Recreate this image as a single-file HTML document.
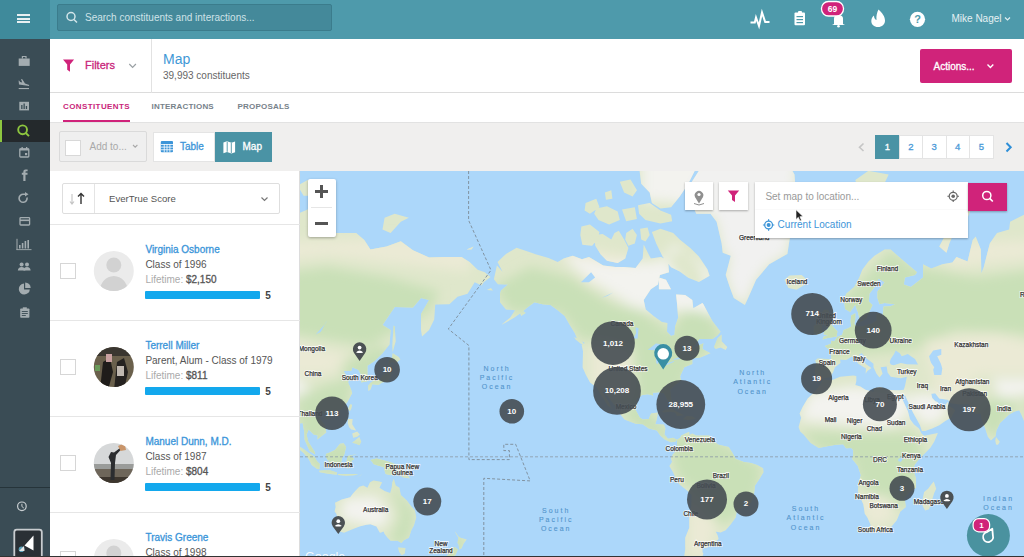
<!DOCTYPE html>
<html><head><meta charset="utf-8">
<style>
*{box-sizing:border-box}
html,body{margin:0;padding:0;width:1024px;height:557px;overflow:hidden;background:#fff;font-family:"Liberation Sans",sans-serif}
.a{position:absolute}
.t{position:absolute;white-space:nowrap;line-height:1}
.m{-webkit-text-stroke:0.3px currentColor}
</style></head><body>
<!-- top bar -->
<div class="a" style="left:0;top:0;width:1024px;height:39px;background:#4e9aab"></div>
<div class="a" style="left:0;top:0;width:50px;height:39px;background:#3f8a9b"></div>
<div class="a" style="left:17px;top:14px;width:13px;height:2px;background:#e8f0f2"></div>
<div class="a" style="left:17px;top:17.5px;width:13px;height:2px;background:#e8f0f2"></div>
<div class="a" style="left:17px;top:21px;width:13px;height:2px;background:#e8f0f2"></div>
<div class="a" style="left:57px;top:4px;width:275px;height:27px;background:#44899a;border:1px solid #3b7c8c;border-radius:2px"></div>
<div class="t" style="left:85px;top:12.5px;font-size:10px;color:#cfe3e8">Search constituents and interactions...</div>
<!-- sidebar -->
<div class="a" style="left:0;top:39px;width:50px;height:518px;background:#3a4c55"></div>
<div class="a" style="left:0;top:120px;width:50px;height:22px;background:#24292c"></div>
<div class="a" style="left:0;top:120px;width:2px;height:22px;background:#8dc63f"></div>
<div class="a" style="left:0;top:487px;width:50px;height:1px;background:#26343a"></div>
<!-- header -->
<div class="a" style="left:50px;top:39px;width:974px;height:54px;background:#fff;border-bottom:1px solid #dcdcdc"></div>
<div class="a" style="left:151px;top:39px;width:1px;height:54px;background:#e2e2e2"></div>
<div class="t m" style="left:85px;top:60px;font-size:11px;color:#c9267a">Filters</div>
<div class="t" style="left:163px;top:51.5px;font-size:14px;color:#3f98d6">Map</div>
<div class="t" style="left:163px;top:71px;font-size:10px;color:#666">39,993 constituents</div>
<div class="a" style="left:920px;top:49px;width:92px;height:34px;background:#d0237a;border-radius:2px"></div>
<div class="t m" style="left:933.5px;top:61.8px;font-size:10px;color:#fff">Actions...</div>
<!-- tabs -->
<div class="a" style="left:50px;top:93px;width:974px;height:29px;background:#fff"></div>
<div class="t" style="left:63px;top:103px;font-size:8px;font-weight:bold;letter-spacing:0.4px;color:#c9267a">CONSTITUENTS</div>
<div class="t" style="left:151.5px;top:103px;font-size:8px;font-weight:bold;letter-spacing:0.2px;color:#77828a">INTERACTIONS</div>
<div class="t" style="left:237.5px;top:103px;font-size:8px;font-weight:bold;letter-spacing:0.2px;color:#77828a">PROPOSALS</div>
<div class="a" style="left:63px;top:120px;width:67px;height:2px;background:#d0237a"></div>
<!-- toolbar -->
<div class="a" style="left:50px;top:122px;width:974px;height:49px;background:#f0efee;border-top:1px solid #e2e2e2"></div>
<div class="a" style="left:59px;top:131px;width:88px;height:31px;background:#efefef;border:1px solid #dadada;border-radius:2px"></div>
<div class="a" style="left:65px;top:139.5px;width:16px;height:16px;background:#fff;border:1px solid #d8d8d8"></div>
<div class="t" style="left:89.5px;top:142px;font-size:10px;color:#a9a9a9">Add to...</div>
<div class="a" style="left:153px;top:132px;width:62px;height:30px;background:#fff;border:1px solid #e4e4e4"></div>
<div class="a" style="left:215px;top:132px;width:57px;height:30px;background:#4a93a5"></div>
<div class="t m" style="left:180px;top:142px;font-size:10px;color:#3d95d8">Table</div>
<div class="t m" style="left:242.5px;top:142px;font-size:10px;color:#fff">Map</div>
<!-- list panel -->
<div class="a" style="left:50px;top:171px;width:250px;height:386px;background:#fff;border-right:1px solid #dcdcdc"></div>

<svg class="a" style="left:0;top:0" width="1024" height="557" viewBox="0 0 1024 557">
<g fill="none" stroke="#d2e5ea" stroke-width="1.5"><circle cx="71" cy="16.5" r="4"/><path d="M74 19.5L77 22.5"/></g>
<g fill="none" stroke="#fff" stroke-width="2" stroke-linejoin="miter" stroke-linecap="square"><path d="M751.5 22.5H754.8L756 17.5L759 26L762 12.5L765.2 22H768.5"/></g>
<g><rect x="794.5" y="12.5" width="10.5" height="12.7" rx="1" fill="#fff"/><rect x="798" y="11" width="4" height="2.5" rx="1" fill="#fff"/>
<rect x="796.5" y="16" width="6.5" height="1.2" fill="#4e9aab"/><rect x="796.5" y="19" width="6.5" height="1.2" fill="#4e9aab"/><rect x="796.5" y="22" width="6.5" height="1.2" fill="#4e9aab"/></g>
<g fill="#fff"><path d="M834 24V18.5Q834 15 838.5 15Q843 15 843 18.5V24L845 25H832Z"/><circle cx="838.5" cy="26.3" r="1.3"/></g>
<rect x="821.5" y="1.5" width="22" height="14.5" rx="7" fill="#d0237a" stroke="#fff" stroke-width="1.3"/>
<text x="832.5" y="12" font-size="8.5" font-weight="bold" fill="#fff" text-anchor="middle" font-family="Liberation Sans">69</text>
<path d="M878.5 9.5C882 13 885 16 885 20.5C885 24.5 882 27 878 27C874 27 871.3 24.5 871.3 21C871.3 18.5 872.5 16.5 874 15.5C874 18 875 19.5 876.5 20C876 16 877 12.5 878.5 9.5Z" fill="#fff"/>
<circle cx="917.5" cy="19.3" r="7.6" fill="#fff"/>
<text x="917.6" y="23.2" font-size="11" font-weight="bold" fill="#4e9aab" text-anchor="middle" font-family="Liberation Sans">?</text>
<path d="M1005 17.5L1007.5 20L1010 17.5" fill="none" stroke="#dfeef1" stroke-width="1.2"/>
<!-- sidebar icons -->
<g fill="#a3acb0">
<path d="M18.7 58.5h11v7.4h-11z"/><path d="M21.8 58.5v-2.6h4.8v2.6h-1.2v-1.5h-2.4v1.5z"/>
<path d="M18.7 88h10.3v1.1h-10.3z"/>
<path d="M19 84.5L29 86L29.2 85L25 83.5L22.3 79.3L21 79L22.2 82.6L20.1 82L19.3 80.7L18.6 80.6L19 84.5Z"/>
<path d="M19.3 101.8h9.7v8.6h-9.7z"/>
</g>
<g fill="#3a4c55"><rect x="21.2" y="105" width="1.3" height="4"/><rect x="23.5" y="103.5" width="1.3" height="5.5"/><rect x="25.8" y="106" width="1.3" height="3"/></g>
<g fill="none" stroke="#8dc63f" stroke-width="1.9"><circle cx="22.6" cy="129.8" r="4.4"/><path d="M25.8 133L29 136.2"/></g>
<g fill="none" stroke="#a3acb0" stroke-width="1.3"><rect x="19.8" y="148.8" width="9" height="8.2" rx="0.8"/></g>
<g fill="#a3acb0"><rect x="19.8" y="148.5" width="9" height="2"/><rect x="21.5" y="147" width="1.3" height="2"/><rect x="26" y="147" width="1.3" height="2"/><rect x="25" y="153" width="2.2" height="2.2"/></g>
<path d="M25.5 181V174.8H27.5V172.8H25.5V171.8Q25.5 171.3 26 171.3H27.6V169.6H25.5Q23.3 169.6 23.3 171.8V172.8H21.8V174.8H23.3V181Z" fill="#a3acb0"/>
<g fill="none" stroke="#a3acb0" stroke-width="1.6"><path d="M27 197.5A4 4 0 1 1 23.5 194.3H26"/></g>
<path d="M25 192L28.5 194.3L25 196.6Z" fill="#a3acb0"/>
<g fill="none" stroke="#a3acb0" stroke-width="1.3"><rect x="20" y="217.6" width="9.6" height="7.4" rx="0.8"/></g>
<rect x="20" y="219.5" width="9.6" height="1.6" fill="#a3acb0"/>
<g fill="#a3acb0"><rect x="16.5" y="238.8" width="1" height="11.2"/><rect x="16.5" y="249.2" width="15" height="0.9"/>
<rect x="19" y="245" width="1.6" height="3.5"/><rect x="21.8" y="243" width="1.6" height="5.5"/><rect x="24.6" y="241" width="1.6" height="7.5"/><rect x="27.4" y="240" width="1.6" height="8.5"/></g>
<g fill="#a3acb0"><circle cx="21.6" cy="264.5" r="2"/><circle cx="27" cy="264.5" r="2"/><path d="M17.8 270.6Q18.2 267 21.6 267Q25 267 25.4 270.6Z"/><path d="M23.4 270.6Q23.6 267 27 267Q30.4 267 30.6 270.6Z"/></g>
<path d="M24 283.6A5.5 5.5 0 1 0 29.8 289.4H24Z" fill="#a3acb0"/><path d="M25.2 282.5A5.5 5.5 0 0 1 30.7 288H25.2Z" fill="#a3acb0"/>
<rect x="20.2" y="308.5" width="9.2" height="9.2" rx="0.8" fill="#a3acb0"/><rect x="22.8" y="307.3" width="4" height="2" fill="#a3acb0"/>
<g fill="#3a4c55"><rect x="21.8" y="311" width="6" height="0.9"/><rect x="21.8" y="313" width="6" height="0.9"/><rect x="21.8" y="315" width="4" height="0.9"/></g>
<circle cx="21.9" cy="506.3" r="4.3" fill="none" stroke="#c9cfd2" stroke-width="1.2"/><path d="M21.9 503.8V506.5L23.8 508" fill="none" stroke="#c9cfd2" stroke-width="1"/>
<rect x="14.3" y="529.6" width="27.5" height="30" rx="2.5" fill="#2a3035" stroke="#c8cccf" stroke-width="1.8"/>
<path d="M33.5 535.5V550.5L24.5 545.5Z" fill="#fff"/><circle cx="21.5" cy="549.2" r="2.8" fill="#5aa0b8"/><path d="M19 551L24 546L24.5 551Z" fill="#e8e8e8"/>
<!-- header icons -->
<path d="M63 59.6H74.1L70 64.5V71.7L67.2 69.8V64.5Z" fill="#d0237a"/>
<path d="M129.3 64L132.6 67.3L135.9 64" fill="none" stroke="#9aa0a4" stroke-width="1.2"/>
<path d="M987.5 64.5L990.4 67.4L993.3 64.5" fill="none" stroke="#fff" stroke-width="1.4"/>
<path d="M133 145L135.2 147.2L137.4 145" fill="none" stroke="#a9a9a9" stroke-width="1.1"/>
<g fill="#3d95d8"><rect x="160.8" y="141" width="12.2" height="11.3" rx="1"/></g>
<g fill="#fff"><rect x="160.8" y="144" width="12.2" height="0.8"/><rect x="160.8" y="146.7" width="12.2" height="0.8"/><rect x="160.8" y="149.4" width="12.2" height="0.8"/>
<rect x="163.8" y="144" width="0.8" height="8.3"/><rect x="166.6" y="144" width="0.8" height="8.3"/><rect x="169.5" y="144" width="0.8" height="8.3"/></g>
<path d="M223.4 142.5L227 141.2L231.5 142.7L235.1 141.4V152.2L231.5 153.5L227 152L223.4 153.3Z" fill="#fff"/>
<path d="M227.2 141.8V151.8M231.3 143V153" stroke="#4a93a5" stroke-width="0.9"/>
</svg>

<div class="a" style="left:61.5px;top:183px;width:218.5px;height:31px;border:1px solid #dedede;border-radius:2px;background:#fff"></div>
<div class="a" style="left:94px;top:184px;width:1px;height:29px;background:#e4e4e4"></div>
<div class="t" style="left:109px;top:194px;font-size:9.6px;color:#555">EverTrue Score</div>
<div class="a" style="left:50px;top:224px;width:250px;height:1px;background:#e6e6e6"></div>
<div class="a" style="left:50px;top:320px;width:250px;height:1px;background:#e6e6e6"></div>
<div class="a" style="left:50px;top:416px;width:250px;height:1px;background:#e6e6e6"></div>
<div class="a" style="left:50px;top:512px;width:250px;height:1px;background:#e6e6e6"></div>
<div class="a" style="left:59.5px;top:262.5px;width:16px;height:16px;border:1px solid #d6d6d6;background:#fff"></div>
<div class="t m" style="left:145.4px;top:244.83px;font-size:10px;color:#3a95d9">Virginia Osborne</div>
<div class="t" style="left:145.4px;top:259.83px;font-size:10px;color:#555">Class of 1996</div>
<div class="t" style="left:145.4px;top:274.53px;font-size:10px;color:#aaa">Lifetime: <span class="m" style="color:#555">$2,150</span></div>
<div class="a" style="left:144.8px;top:291.2px;width:115px;height:8.3px;background:#13a8ed;border-radius:1px"></div>
<div class="t" style="left:265.3px;top:290.72999999999996px;font-size:10px;font-weight:bold;color:#444">5</div>
<div class="a" style="left:59.5px;top:358.5px;width:16px;height:16px;border:1px solid #d6d6d6;background:#fff"></div>
<div class="t m" style="left:145.4px;top:340.83px;font-size:10px;color:#3a95d9">Terrell Miller</div>
<div class="t" style="left:145.4px;top:355.83px;font-size:10px;color:#555">Parent, Alum - Class of 1979</div>
<div class="t" style="left:145.4px;top:370.53px;font-size:10px;color:#aaa">Lifetime: <span class="m" style="color:#555">$811</span></div>
<div class="a" style="left:144.8px;top:387.2px;width:115px;height:8.3px;background:#13a8ed;border-radius:1px"></div>
<div class="t" style="left:265.3px;top:386.72999999999996px;font-size:10px;font-weight:bold;color:#444">5</div>
<div class="a" style="left:59.5px;top:454.5px;width:16px;height:16px;border:1px solid #d6d6d6;background:#fff"></div>
<div class="t m" style="left:145.4px;top:436.83px;font-size:10px;color:#3a95d9">Manuel Dunn, M.D.</div>
<div class="t" style="left:145.4px;top:451.83px;font-size:10px;color:#555">Class of 1987</div>
<div class="t" style="left:145.4px;top:466.53px;font-size:10px;color:#aaa">Lifetime: <span class="m" style="color:#555">$804</span></div>
<div class="a" style="left:144.8px;top:483.2px;width:115px;height:8.3px;background:#13a8ed;border-radius:1px"></div>
<div class="t" style="left:265.3px;top:482.72999999999996px;font-size:10px;font-weight:bold;color:#444">5</div>
<div class="a" style="left:59.5px;top:550.5px;width:16px;height:16px;border:1px solid #d6d6d6;background:#fff"></div>
<div class="t m" style="left:145.4px;top:532.8299999999999px;font-size:10px;color:#3a95d9">Travis Greene</div>
<div class="t" style="left:145.4px;top:547.8299999999999px;font-size:10px;color:#555">Class of 1998</div>

<svg class="a" style="left:50px;top:171px" width="250" height="386" viewBox="50 171 250 386">
<path d="M72 194V204M70 201.5L72 204L74 201.5" fill="none" stroke="#c4c4c4" stroke-width="1.1"/>
<path d="M81 204V193.5M78 196.5L81 193.5L84 196.5" fill="none" stroke="#333" stroke-width="1.4"/>
<path d="M261.5 197.5L264.5 200.5L267.5 197.5" fill="none" stroke="#777" stroke-width="1.2"/>
<defs><clipPath id="c1"><circle cx="113.8" cy="367" r="20"/></clipPath><clipPath id="c2"><circle cx="113.8" cy="463" r="20"/></clipPath><clipPath id="c0"><circle cx="113.8" cy="271" r="20"/></clipPath><clipPath id="c3"><circle cx="113.8" cy="559" r="20"/></clipPath></defs>
<g clip-path="url(#c0)"><rect x="90" y="248" width="50" height="50" fill="#ebebeb"/><circle cx="113.8" cy="265" r="7.5" fill="#d2d2d2"/><path d="M99 295Q100 277 113.8 276Q127.6 277 128.6 295Z" fill="#d2d2d2"/></g>
<g clip-path="url(#c3)"><rect x="90" y="536" width="50" height="50" fill="#ebebeb"/><circle cx="113.8" cy="553" r="7.5" fill="#d2d2d2"/></g>
<g clip-path="url(#c1)"><rect x="90" y="344" width="50" height="50" fill="#6a604c"/><rect x="90" y="344" width="50" height="12" fill="#3a3630"/>
<path d="M100 390L103 362L110 358L113 372L108 390Z" fill="#1f1c1a"/><path d="M114 390L117 362L124 358L128 372L124 390Z" fill="#252220"/><rect x="106" y="354" width="6" height="8" fill="#c9a0a0"/><rect x="95" y="365" width="5" height="6" fill="#6a9a5a"/><rect x="117" y="366" width="7" height="10" fill="#c0b8b0"/></g>
<g clip-path="url(#c2)"><rect x="90" y="440" width="50" height="50" fill="#d6d8d9"/><rect x="90" y="464" width="50" height="5" fill="#9a9c9a"/><rect x="90" y="469" width="50" height="20" fill="#6e665a"/><rect x="90" y="477" width="50" height="10" fill="#3d362e"/>
<path d="M110.5 480L111 463L108.5 457L111 452L114 452.5L120 448L121 449.5L116 455L115 463L114.5 480Z" fill="#2b2d30"/><path d="M118 446L124.5 443L126 450L120.5 451Z" fill="#c9956a"/></g>
</svg>


<div class="a" style="left:875.4px;top:135.4px;width:23.9px;height:23.2px;background:#4a93a5"></div>
<div class="a" style="left:899.3px;top:135.4px;width:94.3px;height:23.2px;background:#fff;border:1px solid #e4e4e4"></div>
<div class="a" style="left:922.3px;top:136px;width:1px;height:22px;background:#e4e4e4"></div>
<div class="a" style="left:946px;top:136px;width:1px;height:22px;background:#e4e4e4"></div>
<div class="a" style="left:969.4px;top:136px;width:1px;height:22px;background:#e4e4e4"></div>
<div class="t m" style="left:875.4px;width:23.9px;text-align:center;top:142.3px;font-size:9.5px;color:#fff">1</div>
<div class="t m" style="left:899.3px;width:23px;text-align:center;top:142.3px;font-size:9.5px;color:#4a9ad8">2</div>
<div class="t m" style="left:922.3px;width:23.7px;text-align:center;top:142.3px;font-size:9.5px;color:#4a9ad8">3</div>
<div class="t m" style="left:946px;width:23.4px;text-align:center;top:142.3px;font-size:9.5px;color:#4a9ad8">4</div>
<div class="t m" style="left:969.4px;width:24.2px;text-align:center;top:142.3px;font-size:9.5px;color:#4a9ad8">5</div>
<svg class="a" style="left:850px;top:135px" width="174" height="25" viewBox="850 135 174 25">
<path d="M863.5 143.5L859.5 147.3L863.5 151" fill="none" stroke="#c6c6c6" stroke-width="1.6"/>
<path d="M1006.5 143L1010.7 147.3L1006.5 151.5" fill="none" stroke="#2e8fd8" stroke-width="2"/>
</svg>
<div class="t" style="left:951.5px;top:14px;font-size:10px;color:#e6f1f3">Mike Nagel</div>

<!-- map -->
<div class="a" style="left:300px;top:171px;width:724px;height:386px;overflow:hidden">
<svg width="724" height="386" viewBox="300 171 724 386" style="position:absolute;left:0;top:0">
<rect x="300" y="171" width="724" height="386" fill="#acd7fa"/>
<defs><clipPath id="landclip"><path d="M493.9 279.3L496.9 265.4L502.6 271.8L497.5 262.0L506.0 253.9L516.6 247.7L526.3 250.9L536.4 254.5L548.6 258.0L557.7 262.0L563.7 258.6L572.8 255.7L582.0 259.2L589.0 256.9L603.2 265.4L615.4 267.0L623.5 267.0L635.6 268.1L642.7 258.6L643.7 244.5L650.8 258.6L660.9 256.9L668.0 260.3L669.0 272.3L659.9 274.9L657.9 284.6L650.8 289.2L643.7 300.1L645.7 309.4L653.8 316.2L661.9 322.0L667.4 323.1L667.0 331.7L671.0 335.9L674.5 335.0L675.1 326.6L678.1 317.7L677.1 304.2L676.1 294.6L685.2 295.0L692.3 300.1L693.3 308.2L702.4 303.0L703.4 304.2L708.5 314.0L712.5 321.3L720.6 331.7L717.6 335.3L712.5 339.1L699.4 339.1L691.3 348.9L703.4 343.2L702.4 348.9L710.5 353.3L700.4 357.6L692.3 358.4L692.3 364.0L684.2 367.2L681.2 373.7L680.1 376.5L681.2 380.8L676.1 384.2L670.0 389.7L671.0 396.8L671.8 402.5L670.0 404.3L667.0 399.1L663.9 393.3L658.9 392.3L652.8 392.8L653.2 395.6L647.8 394.2L642.1 394.9L637.0 399.1L636.6 404.7L636.0 410.7L639.7 417.4L642.7 419.5L648.8 418.9L651.0 413.5L657.9 412.4L656.9 418.9L655.2 424.2L663.9 424.6L665.4 428.4L664.4 434.6L668.0 438.7L673.1 437.7L677.1 439.7L675.1 441.8L671.0 442.2L665.0 439.7L660.3 435.6L656.9 430.5L648.8 428.4L642.7 424.2L635.6 423.8L624.5 419.5L620.4 414.6L620.4 410.2L613.7 404.3L607.3 395.6L601.6 389.0L604.2 395.6L608.3 401.3L610.9 406.9L612.3 409.1L607.3 405.1L603.2 397.9L600.2 393.7L596.9 387.4L590.1 382.5L586.0 375.0L582.6 367.4L583.0 351.3L581.6 344.7L585.0 342.9L576.9 338.2L574.9 333.3L569.8 324.9L564.7 315.9L557.7 310.2L550.6 305.0L542.5 304.2L534.4 302.2L527.3 307.4L522.2 312.1L514.1 317.7L505.0 323.1L501.0 324.9L510.1 317.7L515.2 310.2L506.0 309.4L500.0 302.2L500.0 293.7L501.0 290.6L508.1 284.6L497.9 284.2ZM658.9 289.2L671.0 289.2L666.0 279.8L658.9 277.4ZM686.2 190.7L696.3 213.7L710.5 213.7L716.6 221.8L721.6 243.2L722.7 252.7L730.8 255.7L725.7 274.9L729.7 287.0L733.8 298.0L744.9 305.0L750.0 293.7L756.1 279.8L769.2 264.3L787.4 253.9L789.5 239.9L793.5 221.8L796.5 200.4L794.5 174.4L783.4 155.5L742.9 140.9L712.5 148.4L700.4 168.4ZM784.4 279.8L789.5 275.4L801.6 274.9L804.6 277.4L806.7 282.3L803.6 285.6L796.5 289.7L788.5 287.9ZM855.3 180.1L868.4 170.8L888.7 174.4L878.5 195.7L867.4 208.6L860.3 195.7ZM822.5 339.4L827.9 337.9L836.6 336.6L837.4 331.3L834.6 328.6L831.4 324.5L830.0 319.9L830.0 313.6L827.9 309.8L823.9 309.8L821.4 314.0L822.9 319.5L824.3 323.8L827.9 326.6L827.9 329.0L824.5 330.7L823.5 334.3L827.9 335.3L823.9 336.6ZM821.9 332.7L821.9 326.6L821.9 322.4L818.8 322.0L813.8 325.9L813.8 333.3L816.8 334.6ZM899.4 390.2L894.7 390.2L884.6 389.5L880.6 387.1L874.5 388.6L873.5 392.1L865.4 389.7L860.3 386.4L855.3 384.9L856.3 381.3L856.3 376.0L853.2 375.5L840.1 376.8L831.0 380.5L822.9 379.3L820.8 383.7L814.6 392.1L807.7 398.6L802.6 406.9L799.6 413.5L801.2 417.8L798.6 426.9L800.2 431.5L803.6 434.6L807.1 438.7L810.7 443.0L818.8 448.1L825.9 446.5L836.0 444.8L843.1 444.2L846.1 448.3L851.2 447.9L853.2 449.9L853.2 455.0L852.2 459.0L857.9 466.1L858.9 469.2L860.9 475.3L858.3 483.5L857.9 491.9L863.4 504.6L864.8 513.8L867.4 517.5L870.4 524.3L871.2 530.5L874.5 532.2L878.5 530.3L885.6 530.3L890.7 527.4L896.8 520.3L900.4 511.5L905.9 507.1L904.9 500.5L904.5 497.9L908.9 493.0L916.0 487.7L916.0 478.4L913.6 470.8L914.4 465.1L918.0 460.6L922.1 456.0L930.2 447.9L934.2 441.8L937.9 432.9L924.1 435.8L921.5 433.6L919.0 428.4L914.0 424.6L909.9 418.9L907.9 411.3L903.8 402.5L900.0 393.5ZM933.8 481.5L936.2 488.8L934.2 493.0L931.2 502.7L929.1 509.3L925.1 510.6L922.7 506.0L922.1 501.6L924.1 491.9L928.1 488.8L931.2 484.6ZM996.0 437.1L999.8 441.8L998.0 444.8L996.0 444.4L995.3 440.3ZM677.1 439.7L680.1 437.7L681.2 435.6L684.2 434.0L689.3 431.7L689.3 435.0L692.3 433.6L696.3 435.6L704.4 435.4L709.5 435.6L711.5 439.7L718.6 444.8L728.7 446.9L732.8 453.4L735.8 459.0L743.9 462.1L751.0 463.1L757.1 465.1L763.1 468.2L763.5 472.2L759.1 479.4L755.0 485.6L754.0 494.1L751.0 502.7L746.5 504.9L736.8 510.4L735.8 517.2L730.8 524.3L725.7 530.3L720.6 532.5L715.6 531.5L717.6 535.2L718.6 539.0L715.6 541.8L708.5 542.9L707.5 547.6L702.4 548.2L702.4 552.2L703.4 553.6L701.4 559.2L697.4 563.6L696.3 574.2L694.3 582.3L688.2 585.7L682.2 574.2L684.2 556.4L685.2 549.5L685.2 537.7L689.3 527.8L689.3 516.1L691.3 506.0L691.7 495.1L686.2 489.8L679.5 484.6L677.1 481.5L673.1 472.2L669.4 466.1L672.0 462.1L671.0 458.0L673.1 454.0L675.1 451.9L677.1 448.9L677.1 442.8ZM661.9 411.5L667.2 408.9L672.0 408.9L677.1 411.8L683.8 415.2L677.1 415.9L675.1 412.4L670.0 411.8L663.9 412.4ZM683.2 418.9L686.6 415.9L692.3 416.3L695.7 418.7L692.3 419.5L688.2 419.9L683.6 419.3ZM939.3 246.5L946.4 233.0L952.4 217.8L963.6 209.5L972.7 205.0L967.6 217.8L955.5 229.4L949.4 243.2L946.4 252.7ZM486.8 290.1L492.9 290.6L490.9 287.9ZM521.2 315.9L525.7 312.9L523.2 310.9L520.2 313.6ZM714.0 347.1L717.6 338.2L721.6 334.6L721.6 341.3L727.3 347.1L725.7 350.1L720.6 347.4L715.6 348.9ZM574.1 337.2L580.9 339.8L584.4 344.7L580.9 343.8L575.9 339.8ZM581.4 226.6L589.9 224.4L599.5 231.9L597.4 239.4L592.1 245.8L582.4 244.7L580.3 235.1ZM594.2 235.1L602.7 234.0L611.3 239.4L614.5 233.0L618.8 230.8L624.1 239.4L628.4 247.9L625.2 258.6L617.7 262.9L607.0 260.7L600.6 254.3L595.3 245.8ZM626.2 233.0L632.6 228.7L636.9 235.1L634.8 243.6L628.4 245.8L625.2 239.4ZM640.1 228.7L647.6 227.6L649.7 235.1L645.5 241.5L641.2 239.4ZM651.9 231.9L660.4 228.7L673.2 233.0L679.7 239.4L690.3 247.9L698.9 256.5L707.4 269.3L709.6 275.7L698.9 282.1L688.2 277.8L679.7 271.4L671.1 267.2L662.6 256.5L656.2 243.6ZM596.3 208.4L607.0 206.3L617.7 211.6L619.8 220.1L609.1 224.4L598.5 220.1L594.2 213.7ZM585.6 203.1L596.3 198.8L599.5 207.3L589.9 213.7L584.6 210.5ZM622.0 209.5L634.8 207.3L636.9 219.1L626.2 221.2ZM638.0 205.2L649.7 203.1L660.4 210.5L671.1 214.8L672.2 221.2L660.4 223.4L645.5 220.1L639.1 213.7ZM639.1 166.7L696.8 166.7L688.2 183.8L679.7 196.6L671.1 207.3L660.4 208.4L651.9 203.1L649.7 192.4L641.2 183.8ZM619.8 181.7L630.5 179.5L636.9 190.2L632.6 196.6L624.1 192.4ZM604.9 192.4L611.3 190.2L612.4 198.8L605.9 199.8ZM890.7 249.6L900.8 258.6L917.0 272.3L915.0 274.9L904.9 277.4L903.8 284.6L910.9 287.0L917.0 282.3L923.1 277.4L923.1 264.3L931.2 268.6L942.3 264.3L952.4 262.6L956.5 256.9L967.6 261.5L972.7 239.9L975.7 236.5L980.8 249.6L981.4 273.3L983.8 267.0L989.9 243.2L997.0 233.0L1009.1 229.4L1010.1 221.8L1026.3 213.7L1036.4 209.5L1044.5 198.6L1058.7 207.7L1063.8 233.0L1072.9 233.0L1085.0 233.0L1093.1 239.9L1099.2 249.6L1115.4 246.5L1129.6 241.3L1141.7 250.2L1157.9 257.5L1174.1 256.9L1190.3 256.9L1198.4 262.0L1206.5 269.7L1213.6 272.3L1219.3 276.9L1212.6 282.3L1210.5 285.6L1203.5 282.3L1196.4 293.7L1186.3 296.7L1178.2 304.2L1164.0 304.6L1163.0 319.5L1157.9 330.0L1150.8 336.6L1149.8 330.0L1149.8 314.0L1157.9 300.1L1149.8 298.0L1141.7 307.4L1123.5 307.0L1111.3 324.9L1119.4 330.0L1118.4 344.4L1111.3 353.3L1103.3 360.9L1096.2 365.8L1096.2 381.3L1090.1 382.5L1090.1 375.0L1087.1 369.8L1081.0 367.2L1080.0 371.1L1072.5 371.1L1074.9 375.8L1082.0 375.5L1077.9 378.8L1076.9 382.5L1080.0 389.7L1081.0 393.3L1075.9 402.5L1069.8 409.6L1063.8 410.9L1057.7 413.5L1052.6 412.4L1049.6 415.7L1048.2 418.2L1053.7 425.2L1055.1 432.5L1050.2 436.2L1046.2 439.5L1046.6 435.6L1042.5 434.6L1037.5 429.4L1035.4 434.6L1037.1 441.8L1043.5 451.9L1044.1 454.4L1038.5 450.9L1033.4 439.7L1033.0 431.5L1031.4 423.1L1025.3 424.2L1021.3 414.6L1019.2 410.2L1014.2 411.8L1009.1 414.6L1000.0 423.1L996.4 430.5L995.6 436.2L990.9 440.5L987.9 436.7L984.8 427.3L981.4 417.8L980.8 413.5L975.7 413.9L973.7 410.4L971.7 407.6L968.6 404.0L958.5 404.3L950.0 402.9L948.0 399.7L939.3 398.4L935.2 393.3L931.2 393.7L932.2 397.9L935.2 401.3L937.9 402.2L938.3 406.5L944.3 406.3L948.0 401.8L948.4 405.8L952.4 408.0L955.1 410.4L951.0 417.8L945.3 421.0L939.3 425.2L932.2 428.4L925.1 430.9L921.9 431.1L920.0 425.2L913.0 412.4L904.7 394.4L903.2 398.4L900.0 393.5L899.4 390.2L903.8 389.7L904.9 386.2L906.9 376.8L900.8 378.3L895.7 377.5L890.7 376.8L887.6 372.4L887.0 368.5L886.6 366.4L880.6 367.2L882.6 373.7L879.5 377.5L876.5 373.7L873.5 367.2L873.5 363.7L865.4 357.6L861.7 353.0L858.9 354.8L861.3 359.0L866.4 364.5L871.5 368.0L867.4 371.1L865.6 373.7L866.0 368.5L858.3 363.7L854.6 357.9L851.8 356.5L846.1 360.1L840.1 359.6L840.5 363.1L835.0 367.2L833.0 372.4L830.0 377.0L822.7 378.8L820.8 376.8L815.8 376.3L814.8 371.1L816.2 363.1L815.2 360.4L817.8 358.4L831.0 359.3L831.6 351.9L824.9 345.9L831.0 343.8L831.4 340.7L834.4 341.3L837.2 336.9L842.1 335.0L843.7 330.0L848.2 328.3L851.2 326.6L850.6 321.3L851.2 315.5L855.3 313.2L855.3 318.8L854.2 323.8L856.3 326.6L862.3 326.6L871.5 323.8L876.9 320.6L876.5 314.0L879.5 314.0L882.6 315.9L883.6 306.6L890.7 306.2L895.1 304.2L884.6 303.0L879.5 304.2L877.5 298.0L877.5 291.5L884.6 282.3L878.5 278.4L876.5 284.6L869.4 293.7L868.8 301.4L872.5 305.0L867.4 315.9L866.4 318.8L860.3 321.7L859.3 317.7L857.9 312.1L856.3 308.2L855.3 304.6L850.2 312.1L845.1 309.0L844.1 300.1L846.1 293.7L854.2 287.0L859.3 277.4L862.3 269.7L868.4 261.5L874.5 255.7L884.6 249.6ZM1097.2 390.9L1099.2 389.7L1101.2 384.2L1107.3 384.9L1110.9 382.5L1117.0 381.3L1119.0 377.5L1121.5 369.8L1120.5 365.0L1117.4 367.2L1117.0 372.4L1111.3 375.5L1108.9 379.8L1103.3 380.0L1099.2 383.0L1096.8 385.7ZM1117.4 364.5L1120.5 361.8L1124.5 363.1L1129.2 359.6L1127.5 357.0L1121.5 353.3L1120.5 359.0L1118.0 359.8ZM1121.5 351.9L1124.5 341.3L1123.5 326.6L1122.5 325.6L1121.5 338.2L1121.1 345.9ZM1076.9 409.1L1079.0 404.3L1081.0 404.7L1080.0 409.1L1078.6 411.3ZM1053.9 417.4L1056.7 415.4L1058.7 416.5L1056.7 419.3L1054.1 418.9ZM1076.9 418.9L1081.4 418.9L1081.0 424.2L1085.0 430.5L1080.0 429.4L1077.9 427.3L1076.5 423.1ZM1081.0 442.8L1088.1 437.1L1090.1 441.8L1088.1 445.2L1085.0 443.8ZM1081.0 433.6L1086.0 431.5L1088.7 434.6L1086.0 436.7L1082.0 437.7ZM1054.7 454.0L1059.7 451.9L1063.8 449.9L1068.8 443.8L1072.5 443.2L1074.9 446.9L1072.9 455.0L1070.9 458.0L1069.8 463.1L1065.8 465.1L1058.7 463.1L1056.7 460.0L1054.7 457.0ZM1026.9 445.6L1032.4 448.9L1037.5 453.0L1043.5 457.0L1045.6 461.0L1048.6 464.1L1048.2 469.2L1045.6 468.8L1040.5 465.1L1037.5 459.0L1032.4 453.0L1027.3 448.9ZM1047.6 470.8L1053.7 470.2L1058.7 470.2L1065.8 472.6L1065.8 474.7L1056.7 473.7L1048.6 472.2ZM1066.8 473.9L1074.9 473.9L1083.0 473.9L1087.1 474.3L1083.0 475.3L1074.9 475.7L1066.8 474.9ZM1085.0 477.8L1091.7 474.1L1089.1 475.3ZM1075.9 468.2L1074.9 463.1L1076.5 456.0L1086.0 454.0L1079.0 456.0L1083.0 459.0L1080.0 461.0L1082.0 466.5L1079.0 463.1L1077.9 468.2ZM1099.2 460.0L1105.3 458.6L1111.3 460.0L1119.4 462.3L1128.6 466.1L1132.6 470.2L1138.7 478.4L1131.6 477.3L1125.5 472.8L1119.4 475.3L1114.4 473.9L1112.4 467.1L1107.3 465.7L1102.2 464.1L1101.2 462.1ZM1134.6 468.2L1141.7 465.7L1140.7 468.2L1135.6 469.6ZM1063.8 502.7L1070.5 499.6L1079.0 497.3L1081.4 494.1L1084.0 490.9L1088.1 486.7L1092.1 485.6L1096.2 487.7L1098.8 482.3L1102.2 480.4L1108.3 481.5L1110.9 482.5L1109.3 485.6L1108.3 487.7L1113.4 490.9L1119.0 493.0L1120.5 487.7L1121.1 482.5L1122.5 478.8L1124.5 485.6L1128.2 487.7L1129.6 495.1L1135.6 500.5L1139.7 506.0L1143.7 510.4L1145.0 517.5L1142.7 525.4L1140.3 529.8L1137.7 537.7L1132.6 540.3L1130.2 543.1L1126.5 540.8L1119.4 540.8L1116.4 537.7L1113.4 534.0L1112.4 531.5L1109.3 532.7L1108.3 532.2L1105.3 526.6L1099.2 524.3L1095.2 524.7L1089.1 526.2L1085.0 527.8L1080.0 529.8L1072.9 532.7L1066.8 531.0L1068.2 528.6L1068.4 525.4L1066.8 520.7L1065.2 513.8L1063.4 511.5L1064.4 507.1ZM1126.9 547.4L1134.2 547.9L1133.6 553.6L1130.6 555.3L1127.9 551.7ZM1183.6 531.3L1187.3 536.5L1189.3 537.7L1195.4 539.5L1192.3 543.7L1190.3 548.2L1188.3 549.5L1187.3 544.2L1186.3 542.9L1187.3 537.7L1184.2 532.7ZM1183.2 546.8L1186.7 549.5L1184.2 555.0L1180.2 557.8L1179.2 561.5L1175.1 563.6L1171.1 561.5L1175.1 556.4L1180.2 550.9ZM1026.3 185.5L1036.4 180.1L1044.5 180.1L1044.5 195.7L1032.4 195.7ZM1111.3 229.4L1119.4 233.0L1129.6 221.8L1137.7 217.8L1123.5 213.7L1113.4 217.8ZM1195.4 249.6L1202.4 246.5L1200.4 249.6ZM161.9 249.6L172.0 258.6L188.2 272.3L186.2 274.9L176.1 277.4L175.0 284.6L182.1 287.0L188.2 282.3L194.3 277.4L194.3 264.3L202.4 268.6L213.5 264.3L223.6 262.6L227.7 256.9L238.8 261.5L243.9 239.9L246.9 236.5L252.0 249.6L252.6 273.3L255.0 267.0L261.1 243.2L268.2 233.0L280.3 229.4L281.3 221.8L297.5 213.7L307.6 209.5L315.7 198.6L329.9 207.7L335.0 233.0L344.1 233.0L356.2 233.0L364.3 239.9L370.4 249.6L386.6 246.5L400.8 241.3L412.9 250.2L429.1 257.5L445.3 256.9L461.5 256.9L469.6 262.0L477.7 269.7L484.8 272.3L490.5 276.9L483.8 282.3L481.7 285.6L474.7 282.3L467.6 293.7L457.5 296.7L449.4 304.2L435.2 304.6L434.2 319.5L429.1 330.0L422.0 336.6L421.0 330.0L421.0 314.0L429.1 300.1L421.0 298.0L412.9 307.4L394.7 307.0L382.5 324.9L390.6 330.0L389.6 344.4L382.5 353.3L374.5 360.9L367.4 365.8L367.4 381.3L361.3 382.5L361.3 375.0L358.3 369.8L352.2 367.2L351.2 371.1L343.7 371.1L346.1 375.8L353.2 375.5L349.1 378.8L348.1 382.5L351.2 389.7L352.2 393.3L347.1 402.5L341.0 409.6L335.0 410.9L328.9 413.5L323.8 412.4L320.8 415.7L319.4 418.2L324.9 425.2L326.3 432.5L321.4 436.2L317.4 439.5L317.8 435.6L313.7 434.6L308.7 429.4L306.6 434.6L308.3 441.8L314.7 451.9L315.3 454.4L309.7 450.9L304.6 439.7L304.2 431.5L302.6 423.1L296.5 424.2L292.5 414.6L290.4 410.2L285.4 411.8L280.3 414.6L271.2 423.1L267.6 430.5L266.8 436.2L262.1 440.5L259.1 436.7L256.0 427.3L252.6 417.8L252.0 413.5L246.9 413.9L244.9 410.4L242.9 407.6L239.8 404.0L229.7 404.3L221.2 402.9L219.2 399.7L210.5 398.4L206.4 393.3L202.4 393.7L203.4 397.9L206.4 401.3L209.1 402.2L209.5 406.5L215.5 406.3L219.2 401.8L219.6 405.8L223.6 408.0L226.3 410.4L222.2 417.8L216.5 421.0L210.5 425.2L203.4 428.4L196.3 430.9L193.1 431.1L191.2 425.2L184.2 412.4L175.9 394.4L174.4 398.4L171.2 393.5L170.6 390.2L175.0 389.7L176.1 386.2L178.1 376.8L172.0 378.3L166.9 377.5L161.9 376.8L158.8 372.4L158.2 368.5L157.8 366.4L151.8 367.2L153.8 373.7L150.8 377.5L147.7 373.7L144.7 367.2L144.7 363.7L136.6 357.6L132.9 353.0L130.1 354.8L132.5 359.0L137.6 364.5L142.7 368.0L138.6 371.1L136.8 373.7L137.2 368.5L129.5 363.7L125.8 357.9L123.0 356.5L117.3 360.1L111.3 359.6L111.7 363.1L106.2 367.2L104.2 372.4L101.2 377.0L93.9 378.8L92.0 376.8L87.0 376.3L86.0 371.1L87.4 363.1L86.4 360.4L89.0 358.4L102.2 359.3L102.8 351.9L96.1 345.9L102.2 343.8L102.6 340.7L105.6 341.3L108.4 336.9L113.3 335.0L114.9 330.0L119.4 328.3L122.4 326.6L121.8 321.3L122.4 315.5L126.5 313.2L126.5 318.8L125.4 323.8L127.5 326.6L133.5 326.6L142.7 323.8L148.1 320.6L147.7 314.0L150.8 314.0L153.8 315.9L154.8 306.6L161.9 306.2L166.3 304.2L155.8 303.0L150.8 304.2L148.7 298.0L148.7 291.5L155.8 282.3L149.7 278.4L147.7 284.6L140.6 293.7L140.0 301.4L143.7 305.0L138.6 315.9L137.6 318.8L131.5 321.7L130.5 317.7L129.1 312.1L127.5 308.2L126.5 304.6L121.4 312.1L116.3 309.0L115.3 300.1L117.3 293.7L125.4 287.0L130.5 277.4L133.5 269.7L139.6 261.5L145.7 255.7L155.8 249.6ZM368.4 390.9L370.4 389.7L372.4 384.2L378.5 384.9L382.1 382.5L388.2 381.3L390.2 377.5L392.7 369.8L391.7 365.0L388.6 367.2L388.2 372.4L382.5 375.5L380.1 379.8L374.5 380.0L370.4 383.0L368.0 385.7ZM388.6 364.5L391.7 361.8L395.7 363.1L400.4 359.6L398.7 357.0L392.7 353.3L391.7 359.0L389.2 359.8ZM392.7 351.9L395.7 341.3L394.7 326.6L393.7 325.6L392.7 338.2L392.3 345.9ZM348.1 409.1L350.2 404.3L352.2 404.7L351.2 409.1L349.8 411.3ZM325.1 417.4L327.9 415.4L329.9 416.5L327.9 419.3L325.3 418.9ZM348.1 418.9L352.6 418.9L352.2 424.2L356.2 430.5L351.2 429.4L349.1 427.3L347.7 423.1ZM352.2 442.8L359.3 437.1L361.3 441.8L359.3 445.2L356.2 443.8ZM352.2 433.6L357.2 431.5L359.9 434.6L357.2 436.7L353.2 437.7ZM325.9 454.0L330.9 451.9L335.0 449.9L340.0 443.8L343.7 443.2L346.1 446.9L344.1 455.0L342.1 458.0L341.0 463.1L337.0 465.1L329.9 463.1L327.9 460.0L325.9 457.0ZM298.1 445.6L303.6 448.9L308.7 453.0L314.7 457.0L316.8 461.0L319.8 464.1L319.4 469.2L316.8 468.8L311.7 465.1L308.7 459.0L303.6 453.0L298.5 448.9ZM318.8 470.8L324.9 470.2L329.9 470.2L337.0 472.6L337.0 474.7L327.9 473.7L319.8 472.2ZM338.0 473.9L346.1 473.9L354.2 473.9L358.3 474.3L354.2 475.3L346.1 475.7L338.0 474.9ZM356.2 477.8L362.9 474.1L360.3 475.3ZM347.1 468.2L346.1 463.1L347.7 456.0L357.2 454.0L350.2 456.0L354.2 459.0L351.2 461.0L353.2 466.5L350.2 463.1L349.1 468.2ZM370.4 460.0L376.5 458.6L382.5 460.0L390.6 462.3L399.8 466.1L403.8 470.2L409.9 478.4L402.8 477.3L396.7 472.8L390.6 475.3L385.6 473.9L383.6 467.1L378.5 465.7L373.4 464.1L372.4 462.1ZM405.8 468.2L412.9 465.7L411.9 468.2L406.8 469.6ZM335.0 502.7L341.7 499.6L350.2 497.3L352.6 494.1L355.2 490.9L359.3 486.7L363.3 485.6L367.4 487.7L370.0 482.3L373.4 480.4L379.5 481.5L382.1 482.5L380.5 485.6L379.5 487.7L384.6 490.9L390.2 493.0L391.7 487.7L392.3 482.5L393.7 478.8L395.7 485.6L399.4 487.7L400.8 495.1L406.8 500.5L410.9 506.0L414.9 510.4L416.2 517.5L413.9 525.4L411.5 529.8L408.9 537.7L403.8 540.3L401.4 543.1L397.7 540.8L390.6 540.8L387.6 537.7L384.6 534.0L383.6 531.5L380.5 532.7L379.5 532.2L376.5 526.6L370.4 524.3L366.4 524.7L360.3 526.2L356.2 527.8L351.2 529.8L344.1 532.7L338.0 531.0L339.4 528.6L339.6 525.4L338.0 520.7L336.4 513.8L334.6 511.5L335.6 507.1ZM398.1 547.4L405.4 547.9L404.8 553.6L401.8 555.3L399.1 551.7ZM454.8 531.3L458.5 536.5L460.5 537.7L466.6 539.5L463.5 543.7L461.5 548.2L459.5 549.5L458.5 544.2L457.5 542.9L458.5 537.7L455.4 532.7ZM454.4 546.8L457.9 549.5L455.4 555.0L451.4 557.8L450.4 561.5L446.3 563.6L442.3 561.5L446.3 556.4L451.4 550.9ZM297.5 185.5L307.6 180.1L315.7 180.1L315.7 195.7L303.6 195.7ZM382.5 229.4L390.6 233.0L400.8 221.8L408.9 217.8L394.7 213.7L384.6 217.8ZM466.6 249.6L473.6 246.5L471.6 249.6Z"/></clipPath><filter id="blur" x="-10%" y="-10%" width="120%" height="120%"><feGaussianBlur stdDeviation="6"/></filter></defs><path d="M493.9 279.3L496.9 265.4L502.6 271.8L497.5 262.0L506.0 253.9L516.6 247.7L526.3 250.9L536.4 254.5L548.6 258.0L557.7 262.0L563.7 258.6L572.8 255.7L582.0 259.2L589.0 256.9L603.2 265.4L615.4 267.0L623.5 267.0L635.6 268.1L642.7 258.6L643.7 244.5L650.8 258.6L660.9 256.9L668.0 260.3L669.0 272.3L659.9 274.9L657.9 284.6L650.8 289.2L643.7 300.1L645.7 309.4L653.8 316.2L661.9 322.0L667.4 323.1L667.0 331.7L671.0 335.9L674.5 335.0L675.1 326.6L678.1 317.7L677.1 304.2L676.1 294.6L685.2 295.0L692.3 300.1L693.3 308.2L702.4 303.0L703.4 304.2L708.5 314.0L712.5 321.3L720.6 331.7L717.6 335.3L712.5 339.1L699.4 339.1L691.3 348.9L703.4 343.2L702.4 348.9L710.5 353.3L700.4 357.6L692.3 358.4L692.3 364.0L684.2 367.2L681.2 373.7L680.1 376.5L681.2 380.8L676.1 384.2L670.0 389.7L671.0 396.8L671.8 402.5L670.0 404.3L667.0 399.1L663.9 393.3L658.9 392.3L652.8 392.8L653.2 395.6L647.8 394.2L642.1 394.9L637.0 399.1L636.6 404.7L636.0 410.7L639.7 417.4L642.7 419.5L648.8 418.9L651.0 413.5L657.9 412.4L656.9 418.9L655.2 424.2L663.9 424.6L665.4 428.4L664.4 434.6L668.0 438.7L673.1 437.7L677.1 439.7L675.1 441.8L671.0 442.2L665.0 439.7L660.3 435.6L656.9 430.5L648.8 428.4L642.7 424.2L635.6 423.8L624.5 419.5L620.4 414.6L620.4 410.2L613.7 404.3L607.3 395.6L601.6 389.0L604.2 395.6L608.3 401.3L610.9 406.9L612.3 409.1L607.3 405.1L603.2 397.9L600.2 393.7L596.9 387.4L590.1 382.5L586.0 375.0L582.6 367.4L583.0 351.3L581.6 344.7L585.0 342.9L576.9 338.2L574.9 333.3L569.8 324.9L564.7 315.9L557.7 310.2L550.6 305.0L542.5 304.2L534.4 302.2L527.3 307.4L522.2 312.1L514.1 317.7L505.0 323.1L501.0 324.9L510.1 317.7L515.2 310.2L506.0 309.4L500.0 302.2L500.0 293.7L501.0 290.6L508.1 284.6L497.9 284.2ZM658.9 289.2L671.0 289.2L666.0 279.8L658.9 277.4ZM686.2 190.7L696.3 213.7L710.5 213.7L716.6 221.8L721.6 243.2L722.7 252.7L730.8 255.7L725.7 274.9L729.7 287.0L733.8 298.0L744.9 305.0L750.0 293.7L756.1 279.8L769.2 264.3L787.4 253.9L789.5 239.9L793.5 221.8L796.5 200.4L794.5 174.4L783.4 155.5L742.9 140.9L712.5 148.4L700.4 168.4ZM784.4 279.8L789.5 275.4L801.6 274.9L804.6 277.4L806.7 282.3L803.6 285.6L796.5 289.7L788.5 287.9ZM855.3 180.1L868.4 170.8L888.7 174.4L878.5 195.7L867.4 208.6L860.3 195.7ZM822.5 339.4L827.9 337.9L836.6 336.6L837.4 331.3L834.6 328.6L831.4 324.5L830.0 319.9L830.0 313.6L827.9 309.8L823.9 309.8L821.4 314.0L822.9 319.5L824.3 323.8L827.9 326.6L827.9 329.0L824.5 330.7L823.5 334.3L827.9 335.3L823.9 336.6ZM821.9 332.7L821.9 326.6L821.9 322.4L818.8 322.0L813.8 325.9L813.8 333.3L816.8 334.6ZM899.4 390.2L894.7 390.2L884.6 389.5L880.6 387.1L874.5 388.6L873.5 392.1L865.4 389.7L860.3 386.4L855.3 384.9L856.3 381.3L856.3 376.0L853.2 375.5L840.1 376.8L831.0 380.5L822.9 379.3L820.8 383.7L814.6 392.1L807.7 398.6L802.6 406.9L799.6 413.5L801.2 417.8L798.6 426.9L800.2 431.5L803.6 434.6L807.1 438.7L810.7 443.0L818.8 448.1L825.9 446.5L836.0 444.8L843.1 444.2L846.1 448.3L851.2 447.9L853.2 449.9L853.2 455.0L852.2 459.0L857.9 466.1L858.9 469.2L860.9 475.3L858.3 483.5L857.9 491.9L863.4 504.6L864.8 513.8L867.4 517.5L870.4 524.3L871.2 530.5L874.5 532.2L878.5 530.3L885.6 530.3L890.7 527.4L896.8 520.3L900.4 511.5L905.9 507.1L904.9 500.5L904.5 497.9L908.9 493.0L916.0 487.7L916.0 478.4L913.6 470.8L914.4 465.1L918.0 460.6L922.1 456.0L930.2 447.9L934.2 441.8L937.9 432.9L924.1 435.8L921.5 433.6L919.0 428.4L914.0 424.6L909.9 418.9L907.9 411.3L903.8 402.5L900.0 393.5ZM933.8 481.5L936.2 488.8L934.2 493.0L931.2 502.7L929.1 509.3L925.1 510.6L922.7 506.0L922.1 501.6L924.1 491.9L928.1 488.8L931.2 484.6ZM996.0 437.1L999.8 441.8L998.0 444.8L996.0 444.4L995.3 440.3ZM677.1 439.7L680.1 437.7L681.2 435.6L684.2 434.0L689.3 431.7L689.3 435.0L692.3 433.6L696.3 435.6L704.4 435.4L709.5 435.6L711.5 439.7L718.6 444.8L728.7 446.9L732.8 453.4L735.8 459.0L743.9 462.1L751.0 463.1L757.1 465.1L763.1 468.2L763.5 472.2L759.1 479.4L755.0 485.6L754.0 494.1L751.0 502.7L746.5 504.9L736.8 510.4L735.8 517.2L730.8 524.3L725.7 530.3L720.6 532.5L715.6 531.5L717.6 535.2L718.6 539.0L715.6 541.8L708.5 542.9L707.5 547.6L702.4 548.2L702.4 552.2L703.4 553.6L701.4 559.2L697.4 563.6L696.3 574.2L694.3 582.3L688.2 585.7L682.2 574.2L684.2 556.4L685.2 549.5L685.2 537.7L689.3 527.8L689.3 516.1L691.3 506.0L691.7 495.1L686.2 489.8L679.5 484.6L677.1 481.5L673.1 472.2L669.4 466.1L672.0 462.1L671.0 458.0L673.1 454.0L675.1 451.9L677.1 448.9L677.1 442.8ZM661.9 411.5L667.2 408.9L672.0 408.9L677.1 411.8L683.8 415.2L677.1 415.9L675.1 412.4L670.0 411.8L663.9 412.4ZM683.2 418.9L686.6 415.9L692.3 416.3L695.7 418.7L692.3 419.5L688.2 419.9L683.6 419.3ZM939.3 246.5L946.4 233.0L952.4 217.8L963.6 209.5L972.7 205.0L967.6 217.8L955.5 229.4L949.4 243.2L946.4 252.7ZM486.8 290.1L492.9 290.6L490.9 287.9ZM521.2 315.9L525.7 312.9L523.2 310.9L520.2 313.6ZM714.0 347.1L717.6 338.2L721.6 334.6L721.6 341.3L727.3 347.1L725.7 350.1L720.6 347.4L715.6 348.9ZM574.1 337.2L580.9 339.8L584.4 344.7L580.9 343.8L575.9 339.8ZM581.4 226.6L589.9 224.4L599.5 231.9L597.4 239.4L592.1 245.8L582.4 244.7L580.3 235.1ZM594.2 235.1L602.7 234.0L611.3 239.4L614.5 233.0L618.8 230.8L624.1 239.4L628.4 247.9L625.2 258.6L617.7 262.9L607.0 260.7L600.6 254.3L595.3 245.8ZM626.2 233.0L632.6 228.7L636.9 235.1L634.8 243.6L628.4 245.8L625.2 239.4ZM640.1 228.7L647.6 227.6L649.7 235.1L645.5 241.5L641.2 239.4ZM651.9 231.9L660.4 228.7L673.2 233.0L679.7 239.4L690.3 247.9L698.9 256.5L707.4 269.3L709.6 275.7L698.9 282.1L688.2 277.8L679.7 271.4L671.1 267.2L662.6 256.5L656.2 243.6ZM596.3 208.4L607.0 206.3L617.7 211.6L619.8 220.1L609.1 224.4L598.5 220.1L594.2 213.7ZM585.6 203.1L596.3 198.8L599.5 207.3L589.9 213.7L584.6 210.5ZM622.0 209.5L634.8 207.3L636.9 219.1L626.2 221.2ZM638.0 205.2L649.7 203.1L660.4 210.5L671.1 214.8L672.2 221.2L660.4 223.4L645.5 220.1L639.1 213.7ZM639.1 166.7L696.8 166.7L688.2 183.8L679.7 196.6L671.1 207.3L660.4 208.4L651.9 203.1L649.7 192.4L641.2 183.8ZM619.8 181.7L630.5 179.5L636.9 190.2L632.6 196.6L624.1 192.4ZM604.9 192.4L611.3 190.2L612.4 198.8L605.9 199.8ZM890.7 249.6L900.8 258.6L917.0 272.3L915.0 274.9L904.9 277.4L903.8 284.6L910.9 287.0L917.0 282.3L923.1 277.4L923.1 264.3L931.2 268.6L942.3 264.3L952.4 262.6L956.5 256.9L967.6 261.5L972.7 239.9L975.7 236.5L980.8 249.6L981.4 273.3L983.8 267.0L989.9 243.2L997.0 233.0L1009.1 229.4L1010.1 221.8L1026.3 213.7L1036.4 209.5L1044.5 198.6L1058.7 207.7L1063.8 233.0L1072.9 233.0L1085.0 233.0L1093.1 239.9L1099.2 249.6L1115.4 246.5L1129.6 241.3L1141.7 250.2L1157.9 257.5L1174.1 256.9L1190.3 256.9L1198.4 262.0L1206.5 269.7L1213.6 272.3L1219.3 276.9L1212.6 282.3L1210.5 285.6L1203.5 282.3L1196.4 293.7L1186.3 296.7L1178.2 304.2L1164.0 304.6L1163.0 319.5L1157.9 330.0L1150.8 336.6L1149.8 330.0L1149.8 314.0L1157.9 300.1L1149.8 298.0L1141.7 307.4L1123.5 307.0L1111.3 324.9L1119.4 330.0L1118.4 344.4L1111.3 353.3L1103.3 360.9L1096.2 365.8L1096.2 381.3L1090.1 382.5L1090.1 375.0L1087.1 369.8L1081.0 367.2L1080.0 371.1L1072.5 371.1L1074.9 375.8L1082.0 375.5L1077.9 378.8L1076.9 382.5L1080.0 389.7L1081.0 393.3L1075.9 402.5L1069.8 409.6L1063.8 410.9L1057.7 413.5L1052.6 412.4L1049.6 415.7L1048.2 418.2L1053.7 425.2L1055.1 432.5L1050.2 436.2L1046.2 439.5L1046.6 435.6L1042.5 434.6L1037.5 429.4L1035.4 434.6L1037.1 441.8L1043.5 451.9L1044.1 454.4L1038.5 450.9L1033.4 439.7L1033.0 431.5L1031.4 423.1L1025.3 424.2L1021.3 414.6L1019.2 410.2L1014.2 411.8L1009.1 414.6L1000.0 423.1L996.4 430.5L995.6 436.2L990.9 440.5L987.9 436.7L984.8 427.3L981.4 417.8L980.8 413.5L975.7 413.9L973.7 410.4L971.7 407.6L968.6 404.0L958.5 404.3L950.0 402.9L948.0 399.7L939.3 398.4L935.2 393.3L931.2 393.7L932.2 397.9L935.2 401.3L937.9 402.2L938.3 406.5L944.3 406.3L948.0 401.8L948.4 405.8L952.4 408.0L955.1 410.4L951.0 417.8L945.3 421.0L939.3 425.2L932.2 428.4L925.1 430.9L921.9 431.1L920.0 425.2L913.0 412.4L904.7 394.4L903.2 398.4L900.0 393.5L899.4 390.2L903.8 389.7L904.9 386.2L906.9 376.8L900.8 378.3L895.7 377.5L890.7 376.8L887.6 372.4L887.0 368.5L886.6 366.4L880.6 367.2L882.6 373.7L879.5 377.5L876.5 373.7L873.5 367.2L873.5 363.7L865.4 357.6L861.7 353.0L858.9 354.8L861.3 359.0L866.4 364.5L871.5 368.0L867.4 371.1L865.6 373.7L866.0 368.5L858.3 363.7L854.6 357.9L851.8 356.5L846.1 360.1L840.1 359.6L840.5 363.1L835.0 367.2L833.0 372.4L830.0 377.0L822.7 378.8L820.8 376.8L815.8 376.3L814.8 371.1L816.2 363.1L815.2 360.4L817.8 358.4L831.0 359.3L831.6 351.9L824.9 345.9L831.0 343.8L831.4 340.7L834.4 341.3L837.2 336.9L842.1 335.0L843.7 330.0L848.2 328.3L851.2 326.6L850.6 321.3L851.2 315.5L855.3 313.2L855.3 318.8L854.2 323.8L856.3 326.6L862.3 326.6L871.5 323.8L876.9 320.6L876.5 314.0L879.5 314.0L882.6 315.9L883.6 306.6L890.7 306.2L895.1 304.2L884.6 303.0L879.5 304.2L877.5 298.0L877.5 291.5L884.6 282.3L878.5 278.4L876.5 284.6L869.4 293.7L868.8 301.4L872.5 305.0L867.4 315.9L866.4 318.8L860.3 321.7L859.3 317.7L857.9 312.1L856.3 308.2L855.3 304.6L850.2 312.1L845.1 309.0L844.1 300.1L846.1 293.7L854.2 287.0L859.3 277.4L862.3 269.7L868.4 261.5L874.5 255.7L884.6 249.6ZM1097.2 390.9L1099.2 389.7L1101.2 384.2L1107.3 384.9L1110.9 382.5L1117.0 381.3L1119.0 377.5L1121.5 369.8L1120.5 365.0L1117.4 367.2L1117.0 372.4L1111.3 375.5L1108.9 379.8L1103.3 380.0L1099.2 383.0L1096.8 385.7ZM1117.4 364.5L1120.5 361.8L1124.5 363.1L1129.2 359.6L1127.5 357.0L1121.5 353.3L1120.5 359.0L1118.0 359.8ZM1121.5 351.9L1124.5 341.3L1123.5 326.6L1122.5 325.6L1121.5 338.2L1121.1 345.9ZM1076.9 409.1L1079.0 404.3L1081.0 404.7L1080.0 409.1L1078.6 411.3ZM1053.9 417.4L1056.7 415.4L1058.7 416.5L1056.7 419.3L1054.1 418.9ZM1076.9 418.9L1081.4 418.9L1081.0 424.2L1085.0 430.5L1080.0 429.4L1077.9 427.3L1076.5 423.1ZM1081.0 442.8L1088.1 437.1L1090.1 441.8L1088.1 445.2L1085.0 443.8ZM1081.0 433.6L1086.0 431.5L1088.7 434.6L1086.0 436.7L1082.0 437.7ZM1054.7 454.0L1059.7 451.9L1063.8 449.9L1068.8 443.8L1072.5 443.2L1074.9 446.9L1072.9 455.0L1070.9 458.0L1069.8 463.1L1065.8 465.1L1058.7 463.1L1056.7 460.0L1054.7 457.0ZM1026.9 445.6L1032.4 448.9L1037.5 453.0L1043.5 457.0L1045.6 461.0L1048.6 464.1L1048.2 469.2L1045.6 468.8L1040.5 465.1L1037.5 459.0L1032.4 453.0L1027.3 448.9ZM1047.6 470.8L1053.7 470.2L1058.7 470.2L1065.8 472.6L1065.8 474.7L1056.7 473.7L1048.6 472.2ZM1066.8 473.9L1074.9 473.9L1083.0 473.9L1087.1 474.3L1083.0 475.3L1074.9 475.7L1066.8 474.9ZM1085.0 477.8L1091.7 474.1L1089.1 475.3ZM1075.9 468.2L1074.9 463.1L1076.5 456.0L1086.0 454.0L1079.0 456.0L1083.0 459.0L1080.0 461.0L1082.0 466.5L1079.0 463.1L1077.9 468.2ZM1099.2 460.0L1105.3 458.6L1111.3 460.0L1119.4 462.3L1128.6 466.1L1132.6 470.2L1138.7 478.4L1131.6 477.3L1125.5 472.8L1119.4 475.3L1114.4 473.9L1112.4 467.1L1107.3 465.7L1102.2 464.1L1101.2 462.1ZM1134.6 468.2L1141.7 465.7L1140.7 468.2L1135.6 469.6ZM1063.8 502.7L1070.5 499.6L1079.0 497.3L1081.4 494.1L1084.0 490.9L1088.1 486.7L1092.1 485.6L1096.2 487.7L1098.8 482.3L1102.2 480.4L1108.3 481.5L1110.9 482.5L1109.3 485.6L1108.3 487.7L1113.4 490.9L1119.0 493.0L1120.5 487.7L1121.1 482.5L1122.5 478.8L1124.5 485.6L1128.2 487.7L1129.6 495.1L1135.6 500.5L1139.7 506.0L1143.7 510.4L1145.0 517.5L1142.7 525.4L1140.3 529.8L1137.7 537.7L1132.6 540.3L1130.2 543.1L1126.5 540.8L1119.4 540.8L1116.4 537.7L1113.4 534.0L1112.4 531.5L1109.3 532.7L1108.3 532.2L1105.3 526.6L1099.2 524.3L1095.2 524.7L1089.1 526.2L1085.0 527.8L1080.0 529.8L1072.9 532.7L1066.8 531.0L1068.2 528.6L1068.4 525.4L1066.8 520.7L1065.2 513.8L1063.4 511.5L1064.4 507.1ZM1126.9 547.4L1134.2 547.9L1133.6 553.6L1130.6 555.3L1127.9 551.7ZM1183.6 531.3L1187.3 536.5L1189.3 537.7L1195.4 539.5L1192.3 543.7L1190.3 548.2L1188.3 549.5L1187.3 544.2L1186.3 542.9L1187.3 537.7L1184.2 532.7ZM1183.2 546.8L1186.7 549.5L1184.2 555.0L1180.2 557.8L1179.2 561.5L1175.1 563.6L1171.1 561.5L1175.1 556.4L1180.2 550.9ZM1026.3 185.5L1036.4 180.1L1044.5 180.1L1044.5 195.7L1032.4 195.7ZM1111.3 229.4L1119.4 233.0L1129.6 221.8L1137.7 217.8L1123.5 213.7L1113.4 217.8ZM1195.4 249.6L1202.4 246.5L1200.4 249.6ZM161.9 249.6L172.0 258.6L188.2 272.3L186.2 274.9L176.1 277.4L175.0 284.6L182.1 287.0L188.2 282.3L194.3 277.4L194.3 264.3L202.4 268.6L213.5 264.3L223.6 262.6L227.7 256.9L238.8 261.5L243.9 239.9L246.9 236.5L252.0 249.6L252.6 273.3L255.0 267.0L261.1 243.2L268.2 233.0L280.3 229.4L281.3 221.8L297.5 213.7L307.6 209.5L315.7 198.6L329.9 207.7L335.0 233.0L344.1 233.0L356.2 233.0L364.3 239.9L370.4 249.6L386.6 246.5L400.8 241.3L412.9 250.2L429.1 257.5L445.3 256.9L461.5 256.9L469.6 262.0L477.7 269.7L484.8 272.3L490.5 276.9L483.8 282.3L481.7 285.6L474.7 282.3L467.6 293.7L457.5 296.7L449.4 304.2L435.2 304.6L434.2 319.5L429.1 330.0L422.0 336.6L421.0 330.0L421.0 314.0L429.1 300.1L421.0 298.0L412.9 307.4L394.7 307.0L382.5 324.9L390.6 330.0L389.6 344.4L382.5 353.3L374.5 360.9L367.4 365.8L367.4 381.3L361.3 382.5L361.3 375.0L358.3 369.8L352.2 367.2L351.2 371.1L343.7 371.1L346.1 375.8L353.2 375.5L349.1 378.8L348.1 382.5L351.2 389.7L352.2 393.3L347.1 402.5L341.0 409.6L335.0 410.9L328.9 413.5L323.8 412.4L320.8 415.7L319.4 418.2L324.9 425.2L326.3 432.5L321.4 436.2L317.4 439.5L317.8 435.6L313.7 434.6L308.7 429.4L306.6 434.6L308.3 441.8L314.7 451.9L315.3 454.4L309.7 450.9L304.6 439.7L304.2 431.5L302.6 423.1L296.5 424.2L292.5 414.6L290.4 410.2L285.4 411.8L280.3 414.6L271.2 423.1L267.6 430.5L266.8 436.2L262.1 440.5L259.1 436.7L256.0 427.3L252.6 417.8L252.0 413.5L246.9 413.9L244.9 410.4L242.9 407.6L239.8 404.0L229.7 404.3L221.2 402.9L219.2 399.7L210.5 398.4L206.4 393.3L202.4 393.7L203.4 397.9L206.4 401.3L209.1 402.2L209.5 406.5L215.5 406.3L219.2 401.8L219.6 405.8L223.6 408.0L226.3 410.4L222.2 417.8L216.5 421.0L210.5 425.2L203.4 428.4L196.3 430.9L193.1 431.1L191.2 425.2L184.2 412.4L175.9 394.4L174.4 398.4L171.2 393.5L170.6 390.2L175.0 389.7L176.1 386.2L178.1 376.8L172.0 378.3L166.9 377.5L161.9 376.8L158.8 372.4L158.2 368.5L157.8 366.4L151.8 367.2L153.8 373.7L150.8 377.5L147.7 373.7L144.7 367.2L144.7 363.7L136.6 357.6L132.9 353.0L130.1 354.8L132.5 359.0L137.6 364.5L142.7 368.0L138.6 371.1L136.8 373.7L137.2 368.5L129.5 363.7L125.8 357.9L123.0 356.5L117.3 360.1L111.3 359.6L111.7 363.1L106.2 367.2L104.2 372.4L101.2 377.0L93.9 378.8L92.0 376.8L87.0 376.3L86.0 371.1L87.4 363.1L86.4 360.4L89.0 358.4L102.2 359.3L102.8 351.9L96.1 345.9L102.2 343.8L102.6 340.7L105.6 341.3L108.4 336.9L113.3 335.0L114.9 330.0L119.4 328.3L122.4 326.6L121.8 321.3L122.4 315.5L126.5 313.2L126.5 318.8L125.4 323.8L127.5 326.6L133.5 326.6L142.7 323.8L148.1 320.6L147.7 314.0L150.8 314.0L153.8 315.9L154.8 306.6L161.9 306.2L166.3 304.2L155.8 303.0L150.8 304.2L148.7 298.0L148.7 291.5L155.8 282.3L149.7 278.4L147.7 284.6L140.6 293.7L140.0 301.4L143.7 305.0L138.6 315.9L137.6 318.8L131.5 321.7L130.5 317.7L129.1 312.1L127.5 308.2L126.5 304.6L121.4 312.1L116.3 309.0L115.3 300.1L117.3 293.7L125.4 287.0L130.5 277.4L133.5 269.7L139.6 261.5L145.7 255.7L155.8 249.6ZM368.4 390.9L370.4 389.7L372.4 384.2L378.5 384.9L382.1 382.5L388.2 381.3L390.2 377.5L392.7 369.8L391.7 365.0L388.6 367.2L388.2 372.4L382.5 375.5L380.1 379.8L374.5 380.0L370.4 383.0L368.0 385.7ZM388.6 364.5L391.7 361.8L395.7 363.1L400.4 359.6L398.7 357.0L392.7 353.3L391.7 359.0L389.2 359.8ZM392.7 351.9L395.7 341.3L394.7 326.6L393.7 325.6L392.7 338.2L392.3 345.9ZM348.1 409.1L350.2 404.3L352.2 404.7L351.2 409.1L349.8 411.3ZM325.1 417.4L327.9 415.4L329.9 416.5L327.9 419.3L325.3 418.9ZM348.1 418.9L352.6 418.9L352.2 424.2L356.2 430.5L351.2 429.4L349.1 427.3L347.7 423.1ZM352.2 442.8L359.3 437.1L361.3 441.8L359.3 445.2L356.2 443.8ZM352.2 433.6L357.2 431.5L359.9 434.6L357.2 436.7L353.2 437.7ZM325.9 454.0L330.9 451.9L335.0 449.9L340.0 443.8L343.7 443.2L346.1 446.9L344.1 455.0L342.1 458.0L341.0 463.1L337.0 465.1L329.9 463.1L327.9 460.0L325.9 457.0ZM298.1 445.6L303.6 448.9L308.7 453.0L314.7 457.0L316.8 461.0L319.8 464.1L319.4 469.2L316.8 468.8L311.7 465.1L308.7 459.0L303.6 453.0L298.5 448.9ZM318.8 470.8L324.9 470.2L329.9 470.2L337.0 472.6L337.0 474.7L327.9 473.7L319.8 472.2ZM338.0 473.9L346.1 473.9L354.2 473.9L358.3 474.3L354.2 475.3L346.1 475.7L338.0 474.9ZM356.2 477.8L362.9 474.1L360.3 475.3ZM347.1 468.2L346.1 463.1L347.7 456.0L357.2 454.0L350.2 456.0L354.2 459.0L351.2 461.0L353.2 466.5L350.2 463.1L349.1 468.2ZM370.4 460.0L376.5 458.6L382.5 460.0L390.6 462.3L399.8 466.1L403.8 470.2L409.9 478.4L402.8 477.3L396.7 472.8L390.6 475.3L385.6 473.9L383.6 467.1L378.5 465.7L373.4 464.1L372.4 462.1ZM405.8 468.2L412.9 465.7L411.9 468.2L406.8 469.6ZM335.0 502.7L341.7 499.6L350.2 497.3L352.6 494.1L355.2 490.9L359.3 486.7L363.3 485.6L367.4 487.7L370.0 482.3L373.4 480.4L379.5 481.5L382.1 482.5L380.5 485.6L379.5 487.7L384.6 490.9L390.2 493.0L391.7 487.7L392.3 482.5L393.7 478.8L395.7 485.6L399.4 487.7L400.8 495.1L406.8 500.5L410.9 506.0L414.9 510.4L416.2 517.5L413.9 525.4L411.5 529.8L408.9 537.7L403.8 540.3L401.4 543.1L397.7 540.8L390.6 540.8L387.6 537.7L384.6 534.0L383.6 531.5L380.5 532.7L379.5 532.2L376.5 526.6L370.4 524.3L366.4 524.7L360.3 526.2L356.2 527.8L351.2 529.8L344.1 532.7L338.0 531.0L339.4 528.6L339.6 525.4L338.0 520.7L336.4 513.8L334.6 511.5L335.6 507.1ZM398.1 547.4L405.4 547.9L404.8 553.6L401.8 555.3L399.1 551.7ZM454.8 531.3L458.5 536.5L460.5 537.7L466.6 539.5L463.5 543.7L461.5 548.2L459.5 549.5L458.5 544.2L457.5 542.9L458.5 537.7L455.4 532.7ZM454.4 546.8L457.9 549.5L455.4 555.0L451.4 557.8L450.4 561.5L446.3 563.6L442.3 561.5L446.3 556.4L451.4 550.9ZM297.5 185.5L307.6 180.1L315.7 180.1L315.7 195.7L303.6 195.7ZM382.5 229.4L390.6 233.0L400.8 221.8L408.9 217.8L394.7 213.7L384.6 217.8ZM466.6 249.6L473.6 246.5L471.6 249.6Z" fill="#dfe7cb"/><g clip-path="url(#landclip)"><g filter="url(#blur)"><path d="M493.9 287.0L530.3 267.0L570.8 277.4L611.3 304.2L641.7 312.1L672.0 333.3L682.2 312.1L708.5 312.1L722.7 339.8L700.4 357.6L692.3 365.8L672.0 404.7L635.6 404.7L631.6 368.5L611.3 339.8L580.9 339.8L560.7 312.1L510.1 312.1ZM-234.9 287.0L-198.5 267.0L-158.0 277.4L-117.5 304.2L-87.1 312.1L-56.8 333.3L-46.6 312.1L-20.3 312.1L-6.1 339.8L-28.4 357.6L-36.5 365.8L-56.8 404.7L-93.2 404.7L-97.2 368.5L-117.5 339.8L-147.9 339.8L-168.1 312.1L-218.7 312.1ZM1222.7 287.0L1259.1 267.0L1299.6 277.4L1340.1 304.2L1370.5 312.1L1400.8 333.3L1411.0 312.1L1437.3 312.1L1451.5 339.8L1429.2 357.6L1421.1 365.8L1400.8 404.7L1364.4 404.7L1360.4 368.5L1340.1 339.8L1309.7 339.8L1289.5 312.1L1238.9 312.1ZM619.4 411.3L637.6 402.5L651.8 413.5L678.1 440.8L663.9 440.8L631.6 424.2ZM-109.4 411.3L-91.2 402.5L-77.0 413.5L-50.7 440.8L-64.9 440.8L-97.2 424.2ZM1348.2 411.3L1366.4 402.5L1380.6 413.5L1406.9 440.8L1392.7 440.8L1360.4 424.2ZM672.0 434.6L712.5 436.7L763.1 467.1L753.0 507.1L722.7 525.4L708.5 516.1L696.3 489.8L680.1 481.5L672.0 461.0ZM-56.8 434.6L-16.3 436.7L34.3 467.1L24.2 507.1L-6.1 525.4L-20.3 516.1L-32.5 489.8L-48.7 481.5L-56.8 461.0ZM1400.8 434.6L1441.3 436.7L1491.9 467.1L1481.8 507.1L1451.5 525.4L1437.3 516.1L1425.1 489.8L1408.9 481.5L1400.8 461.0ZM799.6 430.5L854.2 432.5L915.0 432.5L925.1 457.0L915.0 481.5L904.9 511.5L890.7 502.7L870.4 491.9L858.3 481.5L852.2 459.0L817.8 448.9ZM70.8 430.5L125.4 432.5L186.2 432.5L196.3 457.0L186.2 481.5L176.1 511.5L161.9 502.7L141.6 491.9L129.5 481.5L123.4 459.0L89.0 448.9ZM1528.4 430.5L1583.0 432.5L1643.8 432.5L1653.9 457.0L1643.8 481.5L1633.7 511.5L1619.5 502.7L1599.2 491.9L1587.1 481.5L1581.0 459.0L1546.6 448.9ZM813.8 360.4L854.2 354.8L915.0 348.9L955.5 330.0L1016.2 333.3L1097.2 345.9L1157.9 312.1L1168.0 291.5L1117.4 277.4L1056.7 267.0L975.7 277.4L915.0 267.0L890.7 249.6L854.2 287.0L817.8 323.1ZM85.0 360.4L125.4 354.8L186.2 348.9L226.7 330.0L287.4 333.3L368.4 345.9L429.1 312.1L439.2 291.5L388.6 277.4L327.9 267.0L246.9 277.4L186.2 267.0L161.9 249.6L125.4 287.0L89.0 323.1ZM1542.6 360.4L1583.0 354.8L1643.8 348.9L1684.3 330.0L1745.0 333.3L1826.0 345.9L1886.7 312.1L1896.8 291.5L1846.2 277.4L1785.5 267.0L1704.5 277.4L1643.8 267.0L1619.5 249.6L1583.0 287.0L1546.6 323.1ZM1026.3 397.9L1056.7 383.7L1081.0 378.8L1076.9 411.3L1052.6 436.7L1040.5 453.0L1028.3 432.5ZM297.5 397.9L327.9 383.7L352.2 378.8L348.1 411.3L323.8 436.7L311.7 453.0L299.5 432.5ZM1755.1 397.9L1785.5 383.7L1809.8 378.8L1805.7 411.3L1781.4 436.7L1769.3 453.0L1757.1 432.5ZM1072.9 363.1L1105.3 345.9L1129.6 354.8L1117.4 386.2L1093.1 386.2L1072.9 378.8ZM344.1 363.1L376.5 345.9L400.8 354.8L388.6 386.2L364.3 386.2L344.1 378.8ZM1801.7 363.1L1834.1 345.9L1858.4 354.8L1846.2 386.2L1821.9 386.2L1801.7 378.8ZM1026.3 444.8L1089.1 440.8L1141.7 463.1L1143.7 479.4L1097.2 475.3L1046.6 473.2ZM297.5 444.8L360.3 440.8L412.9 463.1L414.9 479.4L368.4 475.3L317.8 473.2ZM1755.1 444.8L1817.9 440.8L1870.5 463.1L1872.5 479.4L1826.0 475.3L1775.4 473.2ZM1121.5 479.4L1129.6 494.1L1143.7 511.5L1139.7 535.2L1129.6 545.5L1117.4 540.3L1129.6 516.1L1121.5 491.9ZM392.7 479.4L400.8 494.1L414.9 511.5L410.9 535.2L400.8 545.5L388.6 540.3L400.8 516.1L392.7 491.9ZM1850.3 479.4L1858.4 494.1L1872.5 511.5L1868.5 535.2L1858.4 545.5L1846.2 540.3L1858.4 516.1L1850.3 491.9ZM975.7 411.3L991.9 397.9L1020.2 402.5L1012.2 413.5L996.0 438.7L983.8 428.4ZM246.9 411.3L263.1 397.9L291.4 402.5L283.4 413.5L267.2 438.7L255.0 428.4ZM1704.5 411.3L1720.7 397.9L1749.0 402.5L1741.0 413.5L1724.8 438.7L1712.6 428.4ZM1182.2 530.3L1196.4 540.3L1184.2 565.1L1170.1 562.1ZM453.4 530.3L467.6 540.3L455.4 565.1L441.3 562.1ZM1911.0 530.3L1925.2 540.3L1913.0 565.1L1898.9 562.1ZM1125.5 545.5L1135.6 545.5L1131.6 556.4ZM396.7 545.5L406.8 545.5L402.8 556.4ZM1854.3 545.5L1864.4 545.5L1860.4 556.4Z" fill="#c9e0b7"/><path d="M925.1 339.8L996.0 333.3L1036.4 345.9L1076.9 354.8L1060.7 373.7L1026.3 373.7L985.8 373.7L955.5 378.8L931.2 373.7ZM196.3 339.8L267.2 333.3L307.6 345.9L348.1 354.8L331.9 373.7L297.5 373.7L257.0 373.7L226.7 378.8L202.4 373.7ZM1653.9 339.8L1724.8 333.3L1765.2 345.9L1805.7 354.8L1789.5 373.7L1755.1 373.7L1714.6 373.7L1684.3 378.8L1660.0 373.7ZM591.1 345.9L631.6 345.9L635.6 393.3L611.3 397.9L591.1 383.7ZM-137.7 345.9L-97.2 345.9L-93.2 393.3L-117.5 397.9L-137.7 383.7ZM1319.9 345.9L1360.4 345.9L1364.4 393.3L1340.1 397.9L1319.9 383.7ZM692.3 498.3L716.6 520.7L708.5 556.4L688.2 556.4L688.2 520.7ZM-36.5 498.3L-12.2 520.7L-20.3 556.4L-40.6 556.4L-40.6 520.7ZM1421.1 498.3L1445.4 520.7L1437.3 556.4L1417.0 556.4L1417.0 520.7ZM858.3 494.1L890.7 498.3L894.7 516.1L874.5 527.8L864.4 516.1ZM129.5 494.1L161.9 498.3L165.9 516.1L145.7 527.8L135.6 516.1ZM1587.1 494.1L1619.5 498.3L1623.5 516.1L1603.3 527.8L1593.2 516.1ZM550.6 243.2L631.6 255.7L651.8 277.4L591.1 287.0ZM-178.2 243.2L-97.2 255.7L-77.0 277.4L-137.7 287.0ZM1279.4 243.2L1360.4 255.7L1380.6 277.4L1319.9 287.0ZM915.0 243.2L1198.4 236.5L1198.4 272.3L1056.7 255.7L955.5 267.0ZM186.2 243.2L469.6 236.5L469.6 272.3L327.9 255.7L226.7 267.0ZM1643.8 243.2L1927.2 236.5L1927.2 272.3L1785.5 255.7L1684.3 267.0ZM931.2 378.8L975.7 378.8L971.7 404.7L951.4 402.5L935.2 393.3ZM202.4 378.8L246.9 378.8L242.9 404.7L222.6 402.5L206.4 393.3ZM1660.0 378.8L1704.5 378.8L1700.5 404.7L1680.2 402.5L1664.0 393.3Z" fill="#ebead5"/><path d="M799.6 419.9L809.7 393.3L854.2 386.2L884.6 390.9L902.8 393.3L908.9 415.7L890.7 426.3L864.4 426.3L823.9 422.1ZM70.8 419.9L80.9 393.3L125.4 386.2L155.8 390.9L174.0 393.3L180.1 415.7L161.9 426.3L135.6 426.3L95.1 422.1ZM1528.4 419.9L1538.5 393.3L1583.0 386.2L1613.4 390.9L1631.6 393.3L1637.7 415.7L1619.5 426.3L1593.2 426.3L1552.7 422.1ZM904.9 395.6L931.2 393.3L949.4 406.9L939.3 422.1L923.1 424.2L913.0 411.3ZM176.1 395.6L202.4 393.3L220.6 406.9L210.5 422.1L194.3 424.2L184.2 411.3ZM1633.7 395.6L1660.0 393.3L1678.2 406.9L1668.1 422.1L1651.9 424.2L1641.8 411.3ZM1072.9 498.3L1105.3 496.2L1119.4 516.1L1109.3 527.8L1087.1 523.1L1068.8 518.4ZM344.1 498.3L376.5 496.2L390.6 516.1L380.5 527.8L358.3 523.1L340.0 518.4ZM1801.7 498.3L1834.1 496.2L1848.2 516.1L1838.1 527.8L1815.9 523.1L1797.6 518.4ZM566.8 261.5L580.9 272.3L601.2 287.0L631.6 306.2L651.8 310.2L676.1 310.2L696.3 310.2L712.5 315.9L722.7 304.2L708.5 267.0L682.2 249.6L655.8 261.5L611.3 264.3L566.8 255.7ZM-162.0 261.5L-147.9 272.3L-127.6 287.0L-97.2 306.2L-77.0 310.2L-52.7 310.2L-32.5 310.2L-16.3 315.9L-6.1 304.2L-20.3 267.0L-46.6 249.6L-73.0 261.5L-117.5 264.3L-162.0 255.7ZM1295.6 261.5L1309.7 272.3L1330.0 287.0L1360.4 306.2L1380.6 310.2L1404.9 310.2L1425.1 310.2L1441.3 315.9L1451.5 304.2L1437.3 267.0L1411.0 249.6L1384.6 261.5L1340.1 264.3L1295.6 255.7ZM641.7 200.4L712.5 205.0L712.5 93.8L641.7 93.8ZM-87.1 200.4L-16.3 205.0L-16.3 93.8L-87.1 93.8ZM1370.5 200.4L1441.3 205.0L1441.3 93.8L1370.5 93.8ZM676.1 243.2L700.4 267.0L706.5 291.5L688.2 289.2L663.9 255.7ZM-52.7 243.2L-28.4 267.0L-22.3 291.5L-40.6 289.2L-64.9 255.7ZM1404.9 243.2L1429.2 267.0L1435.3 291.5L1417.0 289.2L1392.7 255.7ZM682.2 213.7L793.5 213.7L797.6 148.4L682.2 148.4ZM-46.6 213.7L64.7 213.7L68.8 148.4L-46.6 148.4ZM1411.0 213.7L1522.3 213.7L1526.4 148.4L1411.0 148.4ZM991.9 378.8L1032.4 378.8L1036.4 393.3L1000.0 397.9ZM263.1 378.8L303.6 378.8L307.6 393.3L271.2 397.9ZM1720.7 378.8L1761.2 378.8L1765.2 393.3L1728.8 397.9Z" fill="#f3f3ef"/><path d="M686.2 190.7L696.3 213.7L710.5 213.7L716.6 221.8L721.6 243.2L722.7 252.7L730.8 255.7L725.7 274.9L729.7 287.0L733.8 298.0L744.9 305.0L750.0 293.7L756.1 279.8L769.2 264.3L787.4 253.9L789.5 239.9L793.5 221.8L796.5 200.4L794.5 174.4L783.4 155.5L742.9 140.9L712.5 148.4L700.4 168.4ZM-42.6 190.7L-32.5 213.7L-18.3 213.7L-12.2 221.8L-7.2 243.2L-6.1 252.7L2.0 255.7L-3.1 274.9L0.9 287.0L5.0 298.0L16.1 305.0L21.2 293.7L27.3 279.8L40.4 264.3L58.6 253.9L60.7 239.9L64.7 221.8L67.7 200.4L65.7 174.4L54.6 155.5L14.1 140.9L-16.3 148.4L-28.4 168.4ZM1415.0 190.7L1425.1 213.7L1439.3 213.7L1445.4 221.8L1450.4 243.2L1451.5 252.7L1459.6 255.7L1454.5 274.9L1458.5 287.0L1462.6 298.0L1473.7 305.0L1478.8 293.7L1484.9 279.8L1498.0 264.3L1516.2 253.9L1518.3 239.9L1522.3 221.8L1525.3 200.4L1523.3 174.4L1512.2 155.5L1471.7 140.9L1441.3 148.4L1429.2 168.4Z" fill="#f1f1f0"/></g></g><path d="M890.7 364.5L893.7 365.3L900.8 363.1L906.9 364.2L918.0 364.5L915.0 359.0L910.9 356.2L909.9 355.6L907.9 353.9L901.8 356.2L899.8 353.3L895.7 350.4L893.9 354.2L890.7 359.0L889.7 362.3ZM929.1 356.2L933.2 350.4L941.3 348.9L941.3 354.8L937.2 356.2L940.9 363.7L942.3 368.5L941.3 375.0L934.2 375.0L933.2 369.8L934.2 367.2L931.2 363.1L930.2 360.4ZM1044.5 334.6L1049.6 331.7L1055.7 320.6L1054.7 323.1L1048.6 330.0ZM161.9 364.5L164.9 365.3L172.0 363.1L178.1 364.2L189.2 364.5L186.2 359.0L182.1 356.2L181.1 355.6L179.1 353.9L173.0 356.2L171.0 353.3L166.9 350.4L165.1 354.2L161.9 359.0L160.9 362.3ZM200.3 356.2L204.4 350.4L212.5 348.9L212.5 354.8L208.4 356.2L212.1 363.7L213.5 368.5L212.5 375.0L205.4 375.0L204.4 369.8L205.4 367.2L202.4 363.1L201.4 360.4ZM315.7 334.6L320.8 331.7L326.9 320.6L325.9 323.1L319.8 330.0ZM647.8 349.8L652.8 345.9L655.8 343.5L659.9 344.1L662.3 348.9L662.7 350.4L657.9 350.4L650.8 350.1ZM656.3 363.1L657.5 364.2L658.9 361.8L659.9 356.2L661.9 351.9L656.9 352.5L655.8 356.2ZM662.9 351.9L669.0 353.3L672.0 356.2L667.0 360.4L665.0 357.6ZM665.0 364.0L674.1 360.9L674.1 361.8L667.0 365.0ZM672.4 359.6L679.7 357.0L679.7 359.0L674.1 359.8ZM633.6 338.2L637.6 338.8L638.6 328.3L635.6 327.3L636.0 333.3ZM597.1 299.3L607.3 295.9L613.3 292.4L601.2 298.0ZM580.9 282.3L591.1 272.3L595.1 277.4L589.0 282.3ZM898.4 459.0L902.8 456.6L902.8 459.0L900.8 462.1L898.2 461.0Z" fill="#acd7fa"/>
<path d="M300 456.8H1024" stroke="#8d9aa6" stroke-width="0.8" stroke-dasharray="3 2" fill="none"/><path d="M468.6 171V220.3L491 270.2L448.3 329L468.9 345.5V459.6H509.4V450.6H503.8V444.3H515.7L530.2 480.9L483.8 478.3V557" stroke="#7d8b97" stroke-width="0.9" stroke-dasharray="3 2" fill="none"/><g font-family="Liberation Sans" text-anchor="middle"><g font-size="6.5" fill="none" stroke="#fff" stroke-width="1.8" stroke-opacity="0.75"><text x="622" y="325.5">Canada</text><text x="628" y="370.7">United States</text><text x="626" y="409.3">Mexico</text><text x="700" y="442.1">Venezuela</text><text x="679.2" y="451.3">Colombia</text><text x="676.9" y="482.3">Peru</text><text x="720.8" y="477.7">Brazil</text><text x="706" y="488.3">Bolivia</text><text x="690.8" y="515.5">Chile</text><text x="707.8" y="545.5">Argentina</text><text x="839.4" y="354.0">France</text><text x="827" y="364.6">Spain</text><text x="859.2" y="361.3">Italy</text><text x="852.3" y="342.9">Germany</text><text x="900.7" y="342.9">Ukraine</text><text x="971.3" y="347.2">Kazakhstan</text><text x="906.7" y="373.8">Turkey</text><text x="922.4" y="387.7">Iraq</text><text x="945.5" y="391.3">Iran</text><text x="972.3" y="384.4">Afghanistan</text><text x="974.6" y="396.0">Pakistan</text><text x="1004" y="410.8">India</text><text x="838.4" y="400.1">Algeria</text><text x="872" y="402.3">Libya</text><text x="895.2" y="399.3">Egypt</text><text x="927" y="409.3">Saudi Arabia</text><text x="830.6" y="422.3">Mali</text><text x="854.6" y="423.3">Niger</text><text x="874.4" y="430.6">Chad</text><text x="896.1" y="424.6">Sudan</text><text x="851.4" y="439.3">Nigeria</text><text x="915.5" y="441.7">Ethiopia</text><text x="880" y="462.4">DRC</text><text x="911.3" y="458.3">Kenya</text><text x="910" y="472.1">Tanzania</text><text x="868.5" y="484.6">Angola</text><text x="867" y="499.3">Namibia</text><text x="883.7" y="507.7">Botswana</text><text x="931.6" y="504.0">Madagascar</text><text x="875.4" y="531.7">South Africa</text><text x="826.5" y="318.3">United</text><text x="829" y="323.7">Kingdom</text><text x="754.2" y="240.2">Greenland</text><text x="796.9" y="283.9">Iceland</text><text x="887.5" y="271.1">Finland</text><text x="869" y="286.4">Sweden</text><text x="851.3" y="301.7">Norway</text><text x="1030" y="297.1">Russia</text><text x="311.9" y="350.8">Mongolia</text><text x="313" y="376.4">China</text><text x="359.7" y="379.8">South Korea</text><text x="310" y="415.6">Thailand</text><text x="338.5" y="467.4">Indonesia</text><text x="402.3" y="469.1">Papua New</text><text x="402.3" y="475.3">Guinea</text><text x="375.7" y="511.8">Australia</text><text x="441" y="545.7">New</text><text x="441" y="552.7">Zealand</text></g><g font-size="6.5" fill="#333" stroke="#333" stroke-width="0.25"><text x="622" y="325.5">Canada</text><text x="628" y="370.7">United States</text><text x="626" y="409.3">Mexico</text><text x="700" y="442.1">Venezuela</text><text x="679.2" y="451.3">Colombia</text><text x="676.9" y="482.3">Peru</text><text x="720.8" y="477.7">Brazil</text><text x="706" y="488.3">Bolivia</text><text x="690.8" y="515.5">Chile</text><text x="707.8" y="545.5">Argentina</text><text x="839.4" y="354.0">France</text><text x="827" y="364.6">Spain</text><text x="859.2" y="361.3">Italy</text><text x="852.3" y="342.9">Germany</text><text x="900.7" y="342.9">Ukraine</text><text x="971.3" y="347.2">Kazakhstan</text><text x="906.7" y="373.8">Turkey</text><text x="922.4" y="387.7">Iraq</text><text x="945.5" y="391.3">Iran</text><text x="972.3" y="384.4">Afghanistan</text><text x="974.6" y="396.0">Pakistan</text><text x="1004" y="410.8">India</text><text x="838.4" y="400.1">Algeria</text><text x="872" y="402.3">Libya</text><text x="895.2" y="399.3">Egypt</text><text x="927" y="409.3">Saudi Arabia</text><text x="830.6" y="422.3">Mali</text><text x="854.6" y="423.3">Niger</text><text x="874.4" y="430.6">Chad</text><text x="896.1" y="424.6">Sudan</text><text x="851.4" y="439.3">Nigeria</text><text x="915.5" y="441.7">Ethiopia</text><text x="880" y="462.4">DRC</text><text x="911.3" y="458.3">Kenya</text><text x="910" y="472.1">Tanzania</text><text x="868.5" y="484.6">Angola</text><text x="867" y="499.3">Namibia</text><text x="883.7" y="507.7">Botswana</text><text x="931.6" y="504.0">Madagascar</text><text x="875.4" y="531.7">South Africa</text><text x="826.5" y="318.3">United</text><text x="829" y="323.7">Kingdom</text><text x="754.2" y="240.2">Greenland</text><text x="796.9" y="283.9">Iceland</text><text x="887.5" y="271.1">Finland</text><text x="869" y="286.4">Sweden</text><text x="851.3" y="301.7">Norway</text><text x="1030" y="297.1">Russia</text><text x="311.9" y="350.8">Mongolia</text><text x="313" y="376.4">China</text><text x="359.7" y="379.8">South Korea</text><text x="310" y="415.6">Thailand</text><text x="338.5" y="467.4">Indonesia</text><text x="402.3" y="469.1">Papua New</text><text x="402.3" y="475.3">Guinea</text><text x="375.7" y="511.8">Australia</text><text x="441" y="545.7">New</text><text x="441" y="552.7">Zealand</text></g><g font-size="7" fill="#5294cc" stroke="#5294cc" stroke-width="0.1" letter-spacing="2"><text x="752.7" y="374.7">North</text><text x="752.7" y="384.1">Atlantic</text><text x="752.7" y="393.5">Ocean</text><text x="497" y="370.5">North</text><text x="497" y="379.9">Pacific</text><text x="497" y="389.3">Ocean</text><text x="806" y="511.0">South</text><text x="806" y="520.4">Atlantic</text><text x="806" y="529.8">Ocean</text><text x="556.2" y="512.5">South</text><text x="556.2" y="521.9">Pacific</text><text x="556.2" y="531.3">Ocean</text><text x="998.5" y="501.0">Indian</text><text x="998.5" y="510.4">Ocean</text></g></g><circle cx="613" cy="343.1" r="21.9" fill="#454d52" fill-opacity="0.9"/><text x="613" y="345.5" font-size="8" font-weight="bold" fill="#fff" text-anchor="middle" font-family="Liberation Sans">1,012</text><circle cx="687" cy="348.2" r="12.5" fill="#454d52" fill-opacity="0.9"/><text x="687" y="350.6" font-size="8" font-weight="bold" fill="#fff" text-anchor="middle" font-family="Liberation Sans">13</text><circle cx="617" cy="390.9" r="23.9" fill="#454d52" fill-opacity="0.9"/><text x="617" y="393.3" font-size="8" font-weight="bold" fill="#fff" text-anchor="middle" font-family="Liberation Sans">10,208</text><circle cx="680.8" cy="404.5" r="24.4" fill="#454d52" fill-opacity="0.9"/><text x="680.8" y="406.9" font-size="8" font-weight="bold" fill="#fff" text-anchor="middle" font-family="Liberation Sans">28,955</text><circle cx="812.3" cy="314" r="21.1" fill="#454d52" fill-opacity="0.9"/><text x="812.3" y="316.4" font-size="8" font-weight="bold" fill="#fff" text-anchor="middle" font-family="Liberation Sans">714</text><circle cx="873.2" cy="330.2" r="18.4" fill="#454d52" fill-opacity="0.9"/><text x="873.2" y="332.6" font-size="8" font-weight="bold" fill="#fff" text-anchor="middle" font-family="Liberation Sans">140</text><circle cx="816.6" cy="378.7" r="15.5" fill="#454d52" fill-opacity="0.9"/><text x="816.6" y="381.1" font-size="8" font-weight="bold" fill="#fff" text-anchor="middle" font-family="Liberation Sans">19</text><circle cx="879.9" cy="404.2" r="17" fill="#454d52" fill-opacity="0.9"/><text x="879.9" y="406.6" font-size="8" font-weight="bold" fill="#fff" text-anchor="middle" font-family="Liberation Sans">70</text><circle cx="969.1" cy="409.8" r="21.5" fill="#454d52" fill-opacity="0.9"/><text x="969.1" y="412.2" font-size="8" font-weight="bold" fill="#fff" text-anchor="middle" font-family="Liberation Sans">197</text><circle cx="707" cy="499.4" r="20" fill="#454d52" fill-opacity="0.9"/><text x="707" y="501.8" font-size="8" font-weight="bold" fill="#fff" text-anchor="middle" font-family="Liberation Sans">177</text><circle cx="746" cy="504" r="12.5" fill="#454d52" fill-opacity="0.9"/><text x="746" y="506.4" font-size="8" font-weight="bold" fill="#fff" text-anchor="middle" font-family="Liberation Sans">2</text><circle cx="902" cy="488.3" r="12.5" fill="#454d52" fill-opacity="0.9"/><text x="902" y="490.7" font-size="8" font-weight="bold" fill="#fff" text-anchor="middle" font-family="Liberation Sans">3</text><circle cx="387.1" cy="369.8" r="12.8" fill="#454d52" fill-opacity="0.9"/><text x="387.1" y="372.2" font-size="8" font-weight="bold" fill="#fff" text-anchor="middle" font-family="Liberation Sans">10</text><circle cx="332" cy="413.3" r="16.8" fill="#454d52" fill-opacity="0.9"/><text x="332" y="415.7" font-size="8" font-weight="bold" fill="#fff" text-anchor="middle" font-family="Liberation Sans">113</text><circle cx="511.8" cy="411.3" r="12.3" fill="#454d52" fill-opacity="0.9"/><text x="511.8" y="413.7" font-size="8" font-weight="bold" fill="#fff" text-anchor="middle" font-family="Liberation Sans">10</text><circle cx="427.3" cy="501.6" r="14" fill="#454d52" fill-opacity="0.9"/><text x="427.3" y="504.0" font-size="8" font-weight="bold" fill="#fff" text-anchor="middle" font-family="Liberation Sans">17</text><path d="M359.6 361.1L354.1 352.9A6.7 6.7 0 1 1 365.1 352.9Z" fill="#4b5154"/><circle cx="359.6" cy="347.59999999999997" r="1.9" fill="#fff"/><path d="M356.0 352.4Q359.6 348.79999999999995 363.20000000000005 352.4Q359.6 353.59999999999997 356.0 352.4Z" fill="#fff"/><path d="M338.3 534.1L332.8 526.5A6.7 6.7 0 1 1 343.8 526.5Z" fill="#4b5154"/><circle cx="338.3" cy="521.2" r="1.9" fill="#fff"/><path d="M334.7 526.0Q338.3 522.4 341.90000000000003 526.0Q338.3 527.2 334.7 526.0Z" fill="#fff"/><path d="M946.9 509L941.4 501.2A6.7 6.7 0 1 1 952.4 501.2Z" fill="#4b5154"/><circle cx="946.9" cy="495.9" r="1.9" fill="#fff"/><path d="M943.3 500.7Q946.9 497.09999999999997 950.5 500.7Q946.9 501.9 943.3 500.7Z" fill="#fff"/><path d="M663.2 369.5L656 358.5A9 9 0 1 1 670.4 358.5Z" fill="#3a8fa4"/><circle cx="663.2" cy="353.8" r="5.8" fill="#fff"/><text x="305" y="561" font-size="12.5" fill="#fff" fill-opacity="0.9" font-family="Liberation Sans">Google</text><circle cx="988.4" cy="535.5" r="21.5" fill="#4a929f"/><path d="M992.3 528.8L992.9 535.6A5 5 0 1 1 986.6 532.2Z" fill="none" stroke="#fff" stroke-width="1.8" stroke-linejoin="round"/><rect x="973.1" y="518.6" width="16.5" height="13.2" rx="5.5" fill="#d0237a" stroke="#fff" stroke-width="1.2"/><text x="981.4" y="528.3" font-size="8" font-weight="bold" fill="#fff" text-anchor="middle" font-family="Liberation Sans">1</text>
</svg>
</div>

<div class="a" style="left:307.5px;top:179px;width:28.5px;height:57.7px;background:#fff;border-radius:2px;box-shadow:0 1px 3px rgba(0,0,0,0.3)"></div>
<div class="a" style="left:311px;top:207.3px;width:21px;height:1px;background:#e6e6e6"></div>
<div class="a" style="left:315.3px;top:190px;width:13px;height:3px;background:#555"></div>
<div class="a" style="left:320.3px;top:185px;width:3px;height:13px;background:#555"></div>
<div class="a" style="left:315.3px;top:222.3px;width:13px;height:3px;background:#555"></div>
<div class="a" style="left:684.8px;top:182px;width:28.4px;height:28.4px;background:#fff;box-shadow:0 1px 2px rgba(0,0,0,0.3)"></div>
<div class="a" style="left:719.3px;top:182px;width:28.4px;height:28.4px;background:#fff;box-shadow:0 1px 2px rgba(0,0,0,0.3)"></div>
<div class="a" style="left:754.8px;top:182px;width:213px;height:28.4px;background:#fff;box-shadow:0 1px 2px rgba(0,0,0,0.3)"></div>
<div class="a" style="left:754.8px;top:210.4px;width:213px;height:27.4px;background:#fff;box-shadow:0 1px 2px rgba(0,0,0,0.3)"></div>
<div class="a" style="left:968.3px;top:182.6px;width:38.8px;height:28.2px;background:#d0237a;box-shadow:0 1px 2px rgba(0,0,0,0.3)"></div>
<div class="t" style="left:765.4px;top:192.3px;font-size:10px;color:#9a9a9a">Set map to location...</div>
<div class="t" style="left:777.6px;top:219.5px;font-size:10px;color:#3d95d8">Current Location</div>
<svg class="a" style="left:680px;top:176px" width="344" height="64" viewBox="680 176 344 64">
<path d="M699 203.5L695.3 197.5A4.3 4.3 0 1 1 702.7 197.5Z" fill="#8f8f8f"/><circle cx="699" cy="194.5" r="1.6" fill="#fff"/><path d="M694 203.5Q699 206.5 704 203.5" fill="none" stroke="#8f8f8f" stroke-width="1"/>
<path d="M727.8 190.5H739.2L735 195.5V202L732 200V195.5Z" fill="#d0237a"/>
<circle cx="953.2" cy="196.3" r="4" fill="none" stroke="#666" stroke-width="1.2"/><circle cx="953.2" cy="196.3" r="1.8" fill="#666"/><path d="M953.2 190.5V192.3M953.2 200.3V202.1M947.4 196.3H949.2M957.2 196.3H959" stroke="#666" stroke-width="1.1"/>
<circle cx="986.8" cy="195.5" r="4.1" fill="none" stroke="#fff" stroke-width="1.5"/><path d="M989.7 198.4L992.8 201.5" stroke="#fff" stroke-width="1.7"/>
<circle cx="768.6" cy="225" r="3.9" fill="none" stroke="#3d95d8" stroke-width="1.3"/><circle cx="768.6" cy="225" r="2" fill="#3d95d8"/><path d="M768.6 219.3V221.1M768.6 228.9V230.7M762.9 225H764.7M772.5 225H774.3" stroke="#3d95d8" stroke-width="1.2"/>
<path d="M796 209.8V219.5L798.3 217.3L800 221L801.5 220.3L799.9 216.7L803 216.5Z" fill="#222" stroke="#fff" stroke-width="0.6"/>
</svg>

<div class="a" style="left:0;top:556px;width:1024px;height:1px;background:#333"></div>
</body></html>
